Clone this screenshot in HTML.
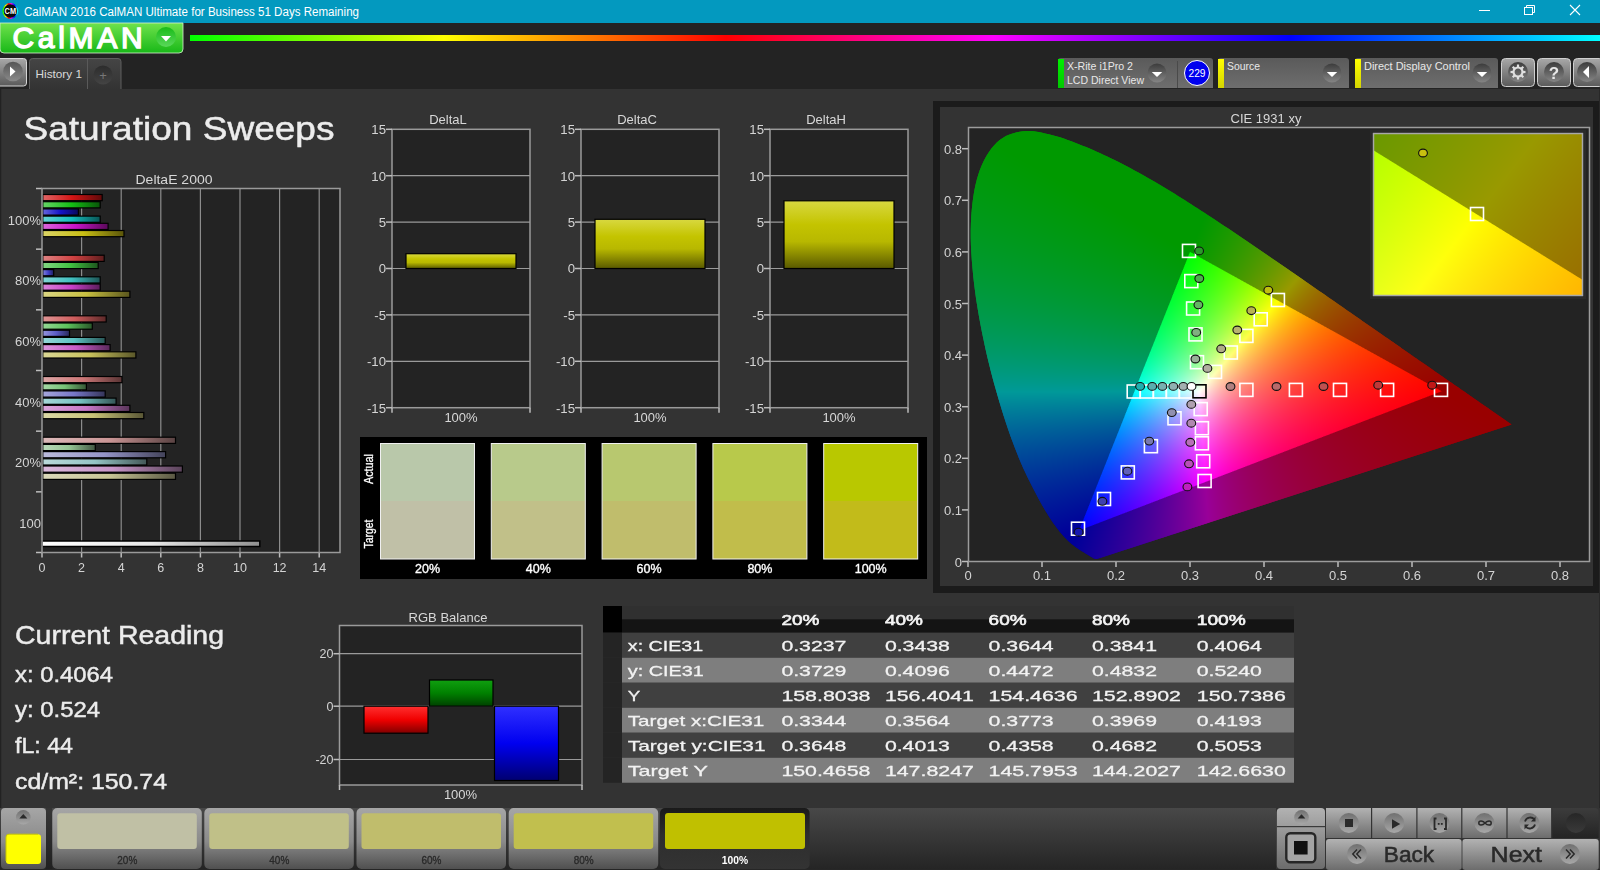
<!DOCTYPE html>
<html><head><meta charset="utf-8"><title>CalMAN</title>
<style>
html,body{margin:0;padding:0;width:1600px;height:870px;overflow:hidden;background:#333333;}
body{position:relative;font-family:"Liberation Sans",sans-serif;}
#cie{position:absolute;left:0;top:0;z-index:1;}
#cv{position:absolute;left:0;top:0;z-index:2;}
#fg{position:absolute;left:0;top:0;z-index:3;}
</style></head><body>
<svg id="cie" width="1600" height="870">
<rect x="933" y="101" width="667" height="492" fill="#1b1b1b"/>
<rect x="940" y="107" width="653" height="479" fill="#333333"/>
<rect x="968" y="127" width="622" height="435" fill="#232323"/>
<rect x="1374" y="134" width="208" height="161" fill="#232323"/>
<clipPath id="clA"><path d="M1096.8 558.9L1096.8 558.9L1096.8 558.9L1096.8 558.9L1096.8 558.9L1096.8 558.9L1096.8 558.9L1096.8 558.9L1096.8 558.9L1096.7 558.9L1096.7 558.9L1096.7 558.9L1096.7 558.9L1096.7 559.0L1096.7 559.0L1096.6 559.0L1096.6 559.0L1096.6 559.0L1096.6 559.0L1096.6 559.0L1096.5 559.0L1096.5 559.0L1096.5 559.0L1096.5 559.0L1096.5 559.0L1096.4 559.0L1096.4 559.0L1096.4 559.0L1096.4 559.0L1096.3 559.0L1096.3 559.0L1096.3 559.0L1096.2 559.0L1096.2 559.0L1096.2 559.0L1096.2 559.0L1096.1 559.0L1096.1 559.0L1096.1 559.0L1096.1 559.0L1096.0 559.0L1096.0 559.0L1096.0 559.0L1095.9 559.0L1095.9 559.0L1095.8 559.0L1095.8 559.0L1095.8 559.0L1095.7 559.0L1095.7 559.0L1095.6 559.0L1095.6 559.0L1095.6 559.0L1095.5 559.0L1095.5 559.0L1095.4 559.0L1095.4 559.0L1095.3 559.0L1095.2 559.0L1095.2 559.0L1095.1 559.0L1095.1 558.9L1095.0 558.9L1094.9 558.9L1094.8 558.9L1094.7 558.8L1094.7 558.8L1094.6 558.8L1094.5 558.7L1094.4 558.7L1094.2 558.6L1094.1 558.6L1094.0 558.5L1093.9 558.4L1093.8 558.4L1093.7 558.3L1093.5 558.3L1093.4 558.2L1093.3 558.1L1093.1 558.0L1093.0 557.9L1092.8 557.8L1092.7 557.7L1092.5 557.6L1092.3 557.5L1092.1 557.4L1091.9 557.3L1091.7 557.2L1091.5 557.1L1091.3 556.9L1091.1 556.8L1090.9 556.7L1090.6 556.5L1090.4 556.4L1090.2 556.2L1089.9 556.0L1089.7 555.9L1089.4 555.7L1089.1 555.5L1088.8 555.4L1088.5 555.2L1088.2 555.0L1087.9 554.8L1087.6 554.6L1087.2 554.4L1086.8 554.2L1086.5 553.9L1086.1 553.7L1085.7 553.4L1085.2 553.2L1084.8 552.9L1084.3 552.6L1083.9 552.4L1083.4 552.1L1082.9 551.8L1082.4 551.5L1081.9 551.2L1081.4 550.9L1080.9 550.5L1080.3 550.2L1079.7 549.8L1079.1 549.4L1078.5 549.0L1077.9 548.6L1077.3 548.1L1076.6 547.7L1076.0 547.2L1075.3 546.7L1074.6 546.2L1073.8 545.6L1073.1 545.1L1072.4 544.5L1071.6 543.9L1070.8 543.2L1070.0 542.5L1069.2 541.8L1068.3 540.9L1067.3 540.0L1066.4 539.0L1065.4 538.0L1064.3 536.9L1063.3 535.7L1062.2 534.5L1061.0 533.1L1059.8 531.7L1058.6 530.1L1057.4 528.5L1056.1 526.9L1054.8 525.1L1053.4 523.2L1052.0 521.2L1050.6 519.0L1049.1 516.7L1047.6 514.2L1046.0 511.7L1044.4 509.0L1042.7 506.1L1041.0 503.1L1039.2 500.0L1037.4 496.6L1035.6 493.0L1033.6 489.3L1031.6 485.4L1029.5 481.3L1027.4 477.0L1025.3 472.6L1023.1 467.9L1021.0 463.1L1018.8 457.9L1016.7 452.6L1014.5 447.0L1012.4 441.2L1010.2 435.2L1008.0 429.0L1005.8 422.6L1003.7 416.0L1001.6 409.3L999.5 402.3L997.4 395.0L995.2 387.6L993.1 379.9L991.1 372.2L989.1 364.3L987.2 356.4L985.4 348.5L983.7 340.6L982.0 332.5L980.4 324.3L978.9 316.1L977.5 307.8L976.2 299.7L975.1 291.6L974.1 283.7L973.2 275.9L972.5 268.1L971.8 260.3L971.3 252.7L970.9 245.1L970.7 237.8L970.7 230.6L970.9 223.6L971.2 216.8L971.7 210.1L972.4 203.6L973.2 197.2L974.2 191.1L975.4 185.2L976.8 179.6L978.3 174.4L980.0 169.4L982.0 164.7L984.1 160.3L986.4 156.1L988.8 152.2L991.4 148.6L994.0 145.4L996.8 142.5L999.7 140.0L1002.7 137.9L1005.9 136.1L1009.2 134.6L1012.6 133.5L1016.0 132.5L1019.5 131.8L1023.0 131.3L1026.5 131.0L1030.1 131.0L1033.8 131.3L1037.5 131.9L1041.3 132.6L1045.0 133.4L1048.8 134.3L1052.5 135.2L1056.2 136.2L1060.0 137.3L1063.8 138.5L1067.6 139.9L1071.3 141.3L1075.1 142.7L1078.8 144.2L1082.5 145.7L1086.1 147.1L1089.7 148.6L1093.3 150.1L1096.8 151.7L1100.3 153.3L1103.8 154.9L1107.3 156.5L1110.7 158.2L1114.2 159.9L1117.6 161.6L1121.0 163.3L1124.4 165.1L1127.8 166.8L1131.2 168.6L1134.5 170.4L1137.9 172.3L1141.3 174.1L1144.6 176.0L1148.0 177.9L1151.3 179.9L1154.7 181.8L1158.0 183.8L1161.4 185.8L1164.7 187.8L1168.0 189.8L1171.3 191.8L1174.7 193.8L1178.0 195.9L1181.3 198.0L1184.6 200.1L1187.9 202.2L1191.2 204.3L1194.5 206.4L1197.8 208.5L1201.1 210.7L1204.4 212.8L1207.7 215.0L1211.0 217.1L1214.3 219.3L1217.6 221.5L1220.9 223.7L1224.2 225.9L1227.5 228.1L1230.9 230.3L1234.2 232.6L1237.5 234.8L1240.8 237.0L1244.1 239.3L1247.4 241.5L1250.7 243.7L1254.0 246.0L1257.3 248.2L1260.6 250.5L1263.9 252.8L1267.2 255.0L1270.4 257.3L1273.7 259.5L1277.0 261.8L1280.3 264.0L1283.6 266.3L1286.9 268.5L1290.1 270.8L1293.4 273.0L1296.6 275.3L1299.9 277.5L1303.1 279.8L1306.3 282.0L1309.6 284.2L1312.8 286.4L1316.0 288.7L1319.1 290.9L1322.3 293.1L1325.5 295.3L1328.6 297.5L1331.8 299.6L1334.9 301.8L1338.0 304.0L1341.1 306.1L1344.2 308.3L1347.2 310.4L1350.3 312.5L1353.3 314.6L1356.4 316.7L1359.4 318.8L1362.3 320.9L1365.3 323.0L1368.2 325.0L1371.2 327.0L1374.0 329.0L1376.9 331.0L1379.8 333.0L1382.6 335.0L1385.4 336.9L1388.2 338.8L1390.9 340.7L1393.6 342.6L1396.3 344.5L1399.0 346.3L1401.6 348.2L1404.2 350.0L1406.7 351.7L1409.3 353.5L1411.7 355.2L1414.1 356.9L1416.5 358.6L1418.8 360.2L1421.1 361.8L1423.4 363.3L1425.6 364.8L1427.7 366.3L1429.9 367.8L1432.0 369.3L1434.1 370.7L1436.1 372.2L1438.1 373.6L1440.1 374.9L1442.1 376.3L1444.0 377.6L1445.8 378.9L1447.7 380.2L1449.4 381.4L1451.2 382.6L1452.9 383.8L1454.5 384.9L1456.1 386.0L1457.7 387.1L1459.2 388.1L1460.7 389.2L1462.1 390.2L1463.6 391.1L1464.9 392.1L1466.3 393.0L1467.6 393.9L1468.8 394.8L1470.1 395.7L1471.3 396.5L1472.4 397.4L1473.6 398.1L1474.7 398.9L1475.7 399.6L1476.8 400.4L1477.8 401.1L1478.8 401.8L1479.7 402.4L1480.6 403.1L1481.5 403.7L1482.4 404.3L1483.3 404.9L1484.1 405.4L1484.9 406.0L1485.7 406.5L1486.4 407.1L1487.2 407.6L1487.9 408.1L1488.6 408.6L1489.3 409.0L1489.9 409.5L1490.6 410.0L1491.2 410.4L1491.8 410.8L1492.5 411.3L1493.1 411.7L1493.6 412.1L1494.2 412.5L1494.8 412.9L1495.3 413.2L1495.8 413.6L1496.4 414.0L1496.9 414.3L1497.4 414.7L1497.8 415.0L1498.3 415.3L1498.8 415.7L1499.2 416.0L1499.6 416.3L1500.1 416.6L1500.5 416.8L1500.9 417.1L1501.3 417.4L1501.6 417.6L1502.0 417.9L1502.3 418.1L1502.7 418.3L1503.0 418.6L1503.3 418.8L1503.6 419.0L1503.9 419.2L1504.2 419.4L1504.5 419.6L1504.7 419.8L1505.0 419.9L1505.2 420.1L1505.5 420.3L1505.7 420.4L1505.9 420.6L1506.2 420.8L1506.4 420.9L1506.6 421.0L1506.8 421.2L1506.9 421.3L1507.1 421.4L1507.2 421.5L1507.3 421.6L1507.5 421.7L1507.6 421.8L1507.7 421.9L1507.9 422.0L1508.2 422.2L1508.6 422.4L1509.0 422.7L1509.5 423.1L1510.0 423.4L1510.5 423.8L1511.0 424.1L1511.4 424.4L1511.7 424.6Z"/></clipPath>
<g clip-path="url(#clA)" shape-rendering="crispEdges">
<rect x="969" y="128" width="300" height="12" fill="#090"/>
<rect x="1269" y="128" width="36" height="12" fill="#290"/>
<rect x="1305" y="128" width="36" height="12" fill="#390"/>
<rect x="1341" y="128" width="24" height="12" fill="#490"/>
<rect x="1365" y="128" width="24" height="12" fill="#690"/>
<rect x="1389" y="128" width="24" height="12" fill="#790"/>
<rect x="1413" y="128" width="24" height="12" fill="#990"/>
<rect x="1437" y="128" width="24" height="12" fill="#970"/>
<rect x="1461" y="128" width="36" height="12" fill="#960"/>
<rect x="1497" y="128" width="60" height="12" fill="#940"/>
<rect x="1557" y="128" width="32" height="12" fill="#930"/>
<rect x="969" y="140" width="300" height="12" fill="#090"/>
<rect x="1269" y="140" width="24" height="12" fill="#290"/>
<rect x="1293" y="140" width="36" height="12" fill="#390"/>
<rect x="1329" y="140" width="24" height="12" fill="#490"/>
<rect x="1353" y="140" width="24" height="12" fill="#690"/>
<rect x="1377" y="140" width="24" height="12" fill="#790"/>
<rect x="1401" y="140" width="24" height="12" fill="#990"/>
<rect x="1425" y="140" width="24" height="12" fill="#970"/>
<rect x="1449" y="140" width="36" height="12" fill="#960"/>
<rect x="1485" y="140" width="60" height="12" fill="#940"/>
<rect x="1545" y="140" width="44" height="12" fill="#930"/>
<rect x="969" y="152" width="288" height="12" fill="#090"/>
<rect x="1257" y="152" width="36" height="12" fill="#290"/>
<rect x="1293" y="152" width="24" height="12" fill="#390"/>
<rect x="1317" y="152" width="24" height="12" fill="#490"/>
<rect x="1341" y="152" width="36" height="12" fill="#690"/>
<rect x="1377" y="152" width="12" height="12" fill="#790"/>
<rect x="1389" y="152" width="24" height="12" fill="#990"/>
<rect x="1413" y="152" width="24" height="12" fill="#970"/>
<rect x="1437" y="152" width="36" height="12" fill="#960"/>
<rect x="1473" y="152" width="60" height="12" fill="#940"/>
<rect x="1533" y="152" width="56" height="12" fill="#930"/>
<rect x="969" y="164" width="288" height="12" fill="#090"/>
<rect x="1257" y="164" width="24" height="12" fill="#290"/>
<rect x="1281" y="164" width="36" height="12" fill="#390"/>
<rect x="1317" y="164" width="24" height="12" fill="#490"/>
<rect x="1341" y="164" width="24" height="12" fill="#690"/>
<rect x="1365" y="164" width="24" height="12" fill="#790"/>
<rect x="1389" y="164" width="12" height="12" fill="#990"/>
<rect x="1401" y="164" width="24" height="12" fill="#970"/>
<rect x="1425" y="164" width="36" height="12" fill="#960"/>
<rect x="1461" y="164" width="48" height="12" fill="#940"/>
<rect x="1509" y="164" width="80" height="12" fill="#930"/>
<rect x="969" y="176" width="276" height="12" fill="#090"/>
<rect x="1245" y="176" width="36" height="12" fill="#290"/>
<rect x="1281" y="176" width="24" height="12" fill="#390"/>
<rect x="1305" y="176" width="24" height="12" fill="#490"/>
<rect x="1329" y="176" width="24" height="12" fill="#690"/>
<rect x="1353" y="176" width="24" height="12" fill="#790"/>
<rect x="1377" y="176" width="12" height="12" fill="#990"/>
<rect x="1389" y="176" width="24" height="12" fill="#970"/>
<rect x="1413" y="176" width="36" height="12" fill="#960"/>
<rect x="1449" y="176" width="48" height="12" fill="#940"/>
<rect x="1497" y="176" width="72" height="12" fill="#930"/>
<rect x="1569" y="176" width="20" height="12" fill="#920"/>
<rect x="969" y="188" width="276" height="12" fill="#090"/>
<rect x="1245" y="188" width="24" height="12" fill="#290"/>
<rect x="1269" y="188" width="24" height="12" fill="#390"/>
<rect x="1293" y="188" width="24" height="12" fill="#490"/>
<rect x="1317" y="188" width="24" height="12" fill="#690"/>
<rect x="1341" y="188" width="24" height="12" fill="#790"/>
<rect x="1365" y="188" width="12" height="12" fill="#990"/>
<rect x="1377" y="188" width="24" height="12" fill="#970"/>
<rect x="1401" y="188" width="36" height="12" fill="#960"/>
<rect x="1437" y="188" width="48" height="12" fill="#940"/>
<rect x="1485" y="188" width="72" height="12" fill="#930"/>
<rect x="1557" y="188" width="32" height="12" fill="#920"/>
<rect x="969" y="200" width="264" height="12" fill="#090"/>
<rect x="1233" y="200" width="36" height="12" fill="#290"/>
<rect x="1269" y="200" width="24" height="12" fill="#390"/>
<rect x="1293" y="200" width="24" height="12" fill="#490"/>
<rect x="1317" y="200" width="12" height="12" fill="#690"/>
<rect x="1329" y="200" width="24" height="12" fill="#790"/>
<rect x="1353" y="200" width="12" height="12" fill="#990"/>
<rect x="1365" y="200" width="24" height="12" fill="#970"/>
<rect x="1389" y="200" width="36" height="12" fill="#960"/>
<rect x="1425" y="200" width="48" height="12" fill="#940"/>
<rect x="1473" y="200" width="72" height="12" fill="#930"/>
<rect x="1545" y="200" width="44" height="12" fill="#920"/>
<rect x="969" y="212" width="12" height="12" fill="#092"/>
<rect x="981" y="212" width="252" height="12" fill="#090"/>
<rect x="1233" y="212" width="24" height="12" fill="#290"/>
<rect x="1257" y="212" width="24" height="12" fill="#390"/>
<rect x="1281" y="212" width="24" height="12" fill="#490"/>
<rect x="1305" y="212" width="24" height="12" fill="#690"/>
<rect x="1329" y="212" width="12" height="12" fill="#790"/>
<rect x="1341" y="212" width="12" height="12" fill="#990"/>
<rect x="1353" y="212" width="24" height="12" fill="#970"/>
<rect x="1377" y="212" width="36" height="12" fill="#960"/>
<rect x="1413" y="212" width="36" height="12" fill="#940"/>
<rect x="1449" y="212" width="72" height="12" fill="#930"/>
<rect x="1521" y="212" width="68" height="12" fill="#920"/>
<rect x="969" y="224" width="48" height="12" fill="#092"/>
<rect x="1017" y="224" width="204" height="12" fill="#090"/>
<rect x="1221" y="224" width="24" height="12" fill="#290"/>
<rect x="1245" y="224" width="24" height="12" fill="#390"/>
<rect x="1269" y="224" width="24" height="12" fill="#490"/>
<rect x="1293" y="224" width="24" height="12" fill="#690"/>
<rect x="1317" y="224" width="12" height="12" fill="#790"/>
<rect x="1329" y="224" width="12" height="12" fill="#990"/>
<rect x="1341" y="224" width="24" height="12" fill="#970"/>
<rect x="1365" y="224" width="36" height="12" fill="#960"/>
<rect x="1401" y="224" width="36" height="12" fill="#940"/>
<rect x="1437" y="224" width="72" height="12" fill="#930"/>
<rect x="1509" y="224" width="80" height="12" fill="#920"/>
<rect x="969" y="236" width="84" height="12" fill="#092"/>
<rect x="1053" y="236" width="168" height="12" fill="#090"/>
<rect x="1221" y="236" width="24" height="12" fill="#290"/>
<rect x="1245" y="236" width="24" height="12" fill="#390"/>
<rect x="1269" y="236" width="12" height="12" fill="#490"/>
<rect x="1281" y="236" width="24" height="12" fill="#690"/>
<rect x="1305" y="236" width="12" height="12" fill="#790"/>
<rect x="1317" y="236" width="24" height="12" fill="#990"/>
<rect x="1341" y="236" width="12" height="12" fill="#970"/>
<rect x="1353" y="236" width="36" height="12" fill="#960"/>
<rect x="1389" y="236" width="36" height="12" fill="#940"/>
<rect x="1425" y="236" width="60" height="12" fill="#930"/>
<rect x="1485" y="236" width="104" height="12" fill="#920"/>
<rect x="969" y="248" width="108" height="12" fill="#092"/>
<rect x="1077" y="248" width="108" height="12" fill="#090"/>
<rect x="1185" y="248" width="12" height="12" fill="#0e0"/>
<rect x="1197" y="248" width="12" height="12" fill="#090"/>
<rect x="1209" y="248" width="24" height="12" fill="#290"/>
<rect x="1233" y="248" width="24" height="12" fill="#390"/>
<rect x="1257" y="248" width="24" height="12" fill="#490"/>
<rect x="1281" y="248" width="12" height="12" fill="#690"/>
<rect x="1293" y="248" width="24" height="12" fill="#790"/>
<rect x="1317" y="248" width="12" height="12" fill="#990"/>
<rect x="1329" y="248" width="12" height="12" fill="#970"/>
<rect x="1341" y="248" width="36" height="12" fill="#960"/>
<rect x="1377" y="248" width="36" height="12" fill="#940"/>
<rect x="1413" y="248" width="60" height="12" fill="#930"/>
<rect x="1473" y="248" width="96" height="12" fill="#920"/>
<rect x="1569" y="248" width="20" height="12" fill="#900"/>
<rect x="969" y="260" width="144" height="12" fill="#092"/>
<rect x="1113" y="260" width="72" height="12" fill="#090"/>
<rect x="1185" y="260" width="12" height="12" fill="#0e0"/>
<rect x="1197" y="260" width="12" height="12" fill="#2e0"/>
<rect x="1209" y="260" width="12" height="12" fill="#3e0"/>
<rect x="1221" y="260" width="12" height="12" fill="#290"/>
<rect x="1233" y="260" width="12" height="12" fill="#390"/>
<rect x="1245" y="260" width="24" height="12" fill="#490"/>
<rect x="1269" y="260" width="12" height="12" fill="#690"/>
<rect x="1281" y="260" width="24" height="12" fill="#790"/>
<rect x="1305" y="260" width="12" height="12" fill="#990"/>
<rect x="1317" y="260" width="12" height="12" fill="#970"/>
<rect x="1329" y="260" width="36" height="12" fill="#960"/>
<rect x="1365" y="260" width="36" height="12" fill="#940"/>
<rect x="1401" y="260" width="48" height="12" fill="#930"/>
<rect x="1449" y="260" width="108" height="12" fill="#920"/>
<rect x="1557" y="260" width="32" height="12" fill="#900"/>
<rect x="969" y="272" width="36" height="12" fill="#093"/>
<rect x="1005" y="272" width="144" height="12" fill="#092"/>
<rect x="1149" y="272" width="36" height="12" fill="#090"/>
<rect x="1185" y="272" width="12" height="12" fill="#0e0"/>
<rect x="1197" y="272" width="12" height="12" fill="#2e0"/>
<rect x="1209" y="272" width="12" height="12" fill="#3e0"/>
<rect x="1221" y="272" width="12" height="12" fill="#4e0"/>
<rect x="1233" y="272" width="12" height="12" fill="#390"/>
<rect x="1245" y="272" width="12" height="12" fill="#490"/>
<rect x="1257" y="272" width="24" height="12" fill="#690"/>
<rect x="1281" y="272" width="12" height="12" fill="#790"/>
<rect x="1293" y="272" width="12" height="12" fill="#990"/>
<rect x="1305" y="272" width="12" height="12" fill="#970"/>
<rect x="1317" y="272" width="36" height="12" fill="#960"/>
<rect x="1353" y="272" width="24" height="12" fill="#940"/>
<rect x="1377" y="272" width="60" height="12" fill="#930"/>
<rect x="1437" y="272" width="96" height="12" fill="#920"/>
<rect x="1533" y="272" width="56" height="12" fill="#900"/>
<rect x="969" y="284" width="84" height="12" fill="#093"/>
<rect x="1053" y="284" width="120" height="12" fill="#092"/>
<rect x="1173" y="284" width="12" height="12" fill="#0e2"/>
<rect x="1185" y="284" width="12" height="12" fill="#2e2"/>
<rect x="1197" y="284" width="12" height="12" fill="#3e2"/>
<rect x="1209" y="284" width="12" height="12" fill="#4e0"/>
<rect x="1221" y="284" width="12" height="12" fill="#6e0"/>
<rect x="1233" y="284" width="12" height="12" fill="#7e0"/>
<rect x="1245" y="284" width="12" height="12" fill="#9e0"/>
<rect x="1257" y="284" width="12" height="12" fill="#690"/>
<rect x="1269" y="284" width="12" height="12" fill="#790"/>
<rect x="1281" y="284" width="12" height="12" fill="#990"/>
<rect x="1293" y="284" width="12" height="12" fill="#970"/>
<rect x="1305" y="284" width="24" height="12" fill="#960"/>
<rect x="1329" y="284" width="36" height="12" fill="#940"/>
<rect x="1365" y="284" width="60" height="12" fill="#930"/>
<rect x="1425" y="284" width="84" height="12" fill="#920"/>
<rect x="1509" y="284" width="80" height="12" fill="#900"/>
<rect x="969" y="296" width="132" height="12" fill="#093"/>
<rect x="1101" y="296" width="72" height="12" fill="#092"/>
<rect x="1173" y="296" width="12" height="12" fill="#0e3"/>
<rect x="1185" y="296" width="12" height="12" fill="#2e2"/>
<rect x="1197" y="296" width="12" height="12" fill="#3e2"/>
<rect x="1209" y="296" width="12" height="12" fill="#4e2"/>
<rect x="1221" y="296" width="12" height="12" fill="#7e2"/>
<rect x="1233" y="296" width="12" height="12" fill="#9e2"/>
<rect x="1245" y="296" width="12" height="12" fill="#ae0"/>
<rect x="1257" y="296" width="12" height="12" fill="#ce0"/>
<rect x="1269" y="296" width="12" height="12" fill="#ee0"/>
<rect x="1281" y="296" width="24" height="12" fill="#970"/>
<rect x="1305" y="296" width="12" height="12" fill="#960"/>
<rect x="1317" y="296" width="36" height="12" fill="#940"/>
<rect x="1353" y="296" width="48" height="12" fill="#930"/>
<rect x="1401" y="296" width="84" height="12" fill="#920"/>
<rect x="1485" y="296" width="104" height="12" fill="#900"/>
<rect x="969" y="308" width="24" height="12" fill="#094"/>
<rect x="993" y="308" width="156" height="12" fill="#093"/>
<rect x="1149" y="308" width="12" height="12" fill="#092"/>
<rect x="1161" y="308" width="12" height="12" fill="#0e3"/>
<rect x="1173" y="308" width="12" height="12" fill="#2e3"/>
<rect x="1185" y="308" width="12" height="12" fill="#3e3"/>
<rect x="1197" y="308" width="12" height="12" fill="#4e3"/>
<rect x="1209" y="308" width="12" height="12" fill="#6e3"/>
<rect x="1221" y="308" width="12" height="12" fill="#7e2"/>
<rect x="1233" y="308" width="12" height="12" fill="#ae2"/>
<rect x="1245" y="308" width="12" height="12" fill="#ce2"/>
<rect x="1257" y="308" width="12" height="12" fill="#ee2"/>
<rect x="1269" y="308" width="12" height="12" fill="#ed0"/>
<rect x="1281" y="308" width="12" height="12" fill="#ec0"/>
<rect x="1293" y="308" width="12" height="12" fill="#ea0"/>
<rect x="1305" y="308" width="36" height="12" fill="#940"/>
<rect x="1341" y="308" width="48" height="12" fill="#930"/>
<rect x="1389" y="308" width="84" height="12" fill="#920"/>
<rect x="1473" y="308" width="116" height="12" fill="#900"/>
<rect x="969" y="320" width="96" height="12" fill="#094"/>
<rect x="1065" y="320" width="96" height="12" fill="#093"/>
<rect x="1161" y="320" width="12" height="12" fill="#0e4"/>
<rect x="1173" y="320" width="12" height="12" fill="#2e4"/>
<rect x="1185" y="320" width="12" height="12" fill="#3e4"/>
<rect x="1197" y="320" width="12" height="12" fill="#6e4"/>
<rect x="1209" y="320" width="12" height="12" fill="#7e3"/>
<rect x="1221" y="320" width="12" height="12" fill="#9e3"/>
<rect x="1233" y="320" width="12" height="12" fill="#ce3"/>
<rect x="1245" y="320" width="12" height="12" fill="#de3"/>
<rect x="1257" y="320" width="12" height="12" fill="#ed2"/>
<rect x="1269" y="320" width="12" height="12" fill="#ec2"/>
<rect x="1281" y="320" width="12" height="12" fill="#ea0"/>
<rect x="1293" y="320" width="12" height="12" fill="#e90"/>
<rect x="1305" y="320" width="24" height="12" fill="#e70"/>
<rect x="1329" y="320" width="36" height="12" fill="#930"/>
<rect x="1365" y="320" width="84" height="12" fill="#920"/>
<rect x="1449" y="320" width="140" height="12" fill="#900"/>
<rect x="969" y="332" width="168" height="12" fill="#094"/>
<rect x="1137" y="332" width="24" height="12" fill="#093"/>
<rect x="1161" y="332" width="12" height="12" fill="#2e6"/>
<rect x="1173" y="332" width="12" height="12" fill="#3e6"/>
<rect x="1185" y="332" width="12" height="12" fill="#4e6"/>
<rect x="1197" y="332" width="12" height="12" fill="#6e4"/>
<rect x="1209" y="332" width="12" height="12" fill="#9e4"/>
<rect x="1221" y="332" width="12" height="12" fill="#ae4"/>
<rect x="1233" y="332" width="12" height="12" fill="#de4"/>
<rect x="1245" y="332" width="12" height="12" fill="#ed3"/>
<rect x="1257" y="332" width="12" height="12" fill="#ec3"/>
<rect x="1269" y="332" width="12" height="12" fill="#ea2"/>
<rect x="1281" y="332" width="12" height="12" fill="#e92"/>
<rect x="1293" y="332" width="12" height="12" fill="#e70"/>
<rect x="1305" y="332" width="24" height="12" fill="#e60"/>
<rect x="1329" y="332" width="12" height="12" fill="#e40"/>
<rect x="1341" y="332" width="12" height="12" fill="#930"/>
<rect x="1353" y="332" width="72" height="12" fill="#920"/>
<rect x="1425" y="332" width="164" height="12" fill="#900"/>
<rect x="969" y="344" width="84" height="12" fill="#096"/>
<rect x="1053" y="344" width="96" height="12" fill="#094"/>
<rect x="1149" y="344" width="12" height="12" fill="#0e7"/>
<rect x="1161" y="344" width="12" height="12" fill="#2e7"/>
<rect x="1173" y="344" width="12" height="12" fill="#3e7"/>
<rect x="1185" y="344" width="12" height="12" fill="#6e7"/>
<rect x="1197" y="344" width="12" height="12" fill="#7e6"/>
<rect x="1209" y="344" width="12" height="12" fill="#ae6"/>
<rect x="1221" y="344" width="12" height="12" fill="#de6"/>
<rect x="1233" y="344" width="12" height="12" fill="#ee6"/>
<rect x="1245" y="344" width="12" height="12" fill="#ec4"/>
<rect x="1257" y="344" width="12" height="12" fill="#ea3"/>
<rect x="1269" y="344" width="12" height="12" fill="#e93"/>
<rect x="1281" y="344" width="12" height="12" fill="#e72"/>
<rect x="1293" y="344" width="12" height="12" fill="#e62"/>
<rect x="1305" y="344" width="12" height="12" fill="#e60"/>
<rect x="1317" y="344" width="24" height="12" fill="#e40"/>
<rect x="1341" y="344" width="24" height="12" fill="#e30"/>
<rect x="1365" y="344" width="36" height="12" fill="#920"/>
<rect x="1401" y="344" width="188" height="12" fill="#900"/>
<rect x="969" y="356" width="180" height="12" fill="#096"/>
<rect x="1149" y="356" width="12" height="12" fill="#0e9"/>
<rect x="1161" y="356" width="12" height="12" fill="#3e9"/>
<rect x="1173" y="356" width="12" height="12" fill="#4e9"/>
<rect x="1185" y="356" width="12" height="12" fill="#7e9"/>
<rect x="1197" y="356" width="12" height="12" fill="#ae9"/>
<rect x="1209" y="356" width="12" height="12" fill="#ce9"/>
<rect x="1221" y="356" width="12" height="12" fill="#ee7"/>
<rect x="1233" y="356" width="12" height="12" fill="#ec6"/>
<rect x="1245" y="356" width="12" height="12" fill="#ea4"/>
<rect x="1257" y="356" width="12" height="12" fill="#e94"/>
<rect x="1269" y="356" width="12" height="12" fill="#e73"/>
<rect x="1281" y="356" width="12" height="12" fill="#e63"/>
<rect x="1293" y="356" width="12" height="12" fill="#e62"/>
<rect x="1305" y="356" width="24" height="12" fill="#e42"/>
<rect x="1329" y="356" width="36" height="12" fill="#e30"/>
<rect x="1365" y="356" width="24" height="12" fill="#e20"/>
<rect x="1389" y="356" width="200" height="12" fill="#900"/>
<rect x="969" y="368" width="156" height="12" fill="#097"/>
<rect x="1125" y="368" width="12" height="12" fill="#096"/>
<rect x="1137" y="368" width="12" height="12" fill="#0ec"/>
<rect x="1149" y="368" width="12" height="12" fill="#2ec"/>
<rect x="1161" y="368" width="12" height="12" fill="#4ec"/>
<rect x="1173" y="368" width="12" height="12" fill="#6ea"/>
<rect x="1185" y="368" width="12" height="12" fill="#9ea"/>
<rect x="1197" y="368" width="12" height="12" fill="#cea"/>
<rect x="1209" y="368" width="12" height="12" fill="#eea"/>
<rect x="1221" y="368" width="12" height="12" fill="#ec9"/>
<rect x="1233" y="368" width="12" height="12" fill="#ea6"/>
<rect x="1245" y="368" width="12" height="12" fill="#e96"/>
<rect x="1257" y="368" width="12" height="12" fill="#e74"/>
<rect x="1269" y="368" width="12" height="12" fill="#e63"/>
<rect x="1281" y="368" width="24" height="12" fill="#e43"/>
<rect x="1305" y="368" width="36" height="12" fill="#e32"/>
<rect x="1341" y="368" width="60" height="12" fill="#e20"/>
<rect x="1401" y="368" width="12" height="12" fill="#e00"/>
<rect x="1413" y="368" width="176" height="12" fill="#900"/>
<rect x="969" y="380" width="24" height="12" fill="#099"/>
<rect x="993" y="380" width="144" height="12" fill="#097"/>
<rect x="1137" y="380" width="12" height="12" fill="#0ed"/>
<rect x="1149" y="380" width="12" height="12" fill="#3ed"/>
<rect x="1161" y="380" width="12" height="12" fill="#6ed"/>
<rect x="1173" y="380" width="12" height="12" fill="#9ed"/>
<rect x="1185" y="380" width="12" height="12" fill="#ced"/>
<rect x="1197" y="380" width="12" height="12" fill="#eed"/>
<rect x="1209" y="380" width="12" height="12" fill="#eca"/>
<rect x="1221" y="380" width="12" height="12" fill="#ea9"/>
<rect x="1233" y="380" width="12" height="12" fill="#e97"/>
<rect x="1245" y="380" width="12" height="12" fill="#e76"/>
<rect x="1257" y="380" width="12" height="12" fill="#e64"/>
<rect x="1269" y="380" width="12" height="12" fill="#e44"/>
<rect x="1281" y="380" width="12" height="12" fill="#e43"/>
<rect x="1293" y="380" width="12" height="12" fill="#e33"/>
<rect x="1305" y="380" width="24" height="12" fill="#e32"/>
<rect x="1329" y="380" width="24" height="12" fill="#e22"/>
<rect x="1353" y="380" width="24" height="12" fill="#e20"/>
<rect x="1377" y="380" width="60" height="12" fill="#e00"/>
<rect x="1437" y="380" width="152" height="12" fill="#900"/>
<rect x="969" y="392" width="36" height="12" fill="#099"/>
<rect x="1005" y="392" width="132" height="12" fill="#079"/>
<rect x="1137" y="392" width="12" height="12" fill="#2de"/>
<rect x="1149" y="392" width="12" height="12" fill="#4de"/>
<rect x="1161" y="392" width="12" height="12" fill="#6de"/>
<rect x="1173" y="392" width="12" height="12" fill="#9de"/>
<rect x="1185" y="392" width="12" height="12" fill="#cde"/>
<rect x="1197" y="392" width="12" height="12" fill="#ece"/>
<rect x="1209" y="392" width="12" height="12" fill="#eac"/>
<rect x="1221" y="392" width="12" height="12" fill="#e79"/>
<rect x="1233" y="392" width="12" height="12" fill="#e67"/>
<rect x="1245" y="392" width="12" height="12" fill="#e66"/>
<rect x="1257" y="392" width="12" height="12" fill="#e46"/>
<rect x="1269" y="392" width="24" height="12" fill="#e34"/>
<rect x="1293" y="392" width="12" height="12" fill="#e33"/>
<rect x="1305" y="392" width="12" height="12" fill="#e23"/>
<rect x="1317" y="392" width="36" height="12" fill="#e22"/>
<rect x="1353" y="392" width="12" height="12" fill="#e02"/>
<rect x="1365" y="392" width="60" height="12" fill="#e00"/>
<rect x="1425" y="392" width="164" height="12" fill="#900"/>
<rect x="969" y="404" width="132" height="12" fill="#079"/>
<rect x="1101" y="404" width="24" height="12" fill="#069"/>
<rect x="1125" y="404" width="12" height="12" fill="#0ce"/>
<rect x="1137" y="404" width="12" height="12" fill="#2ce"/>
<rect x="1149" y="404" width="12" height="12" fill="#4ae"/>
<rect x="1161" y="404" width="12" height="12" fill="#7ae"/>
<rect x="1173" y="404" width="12" height="12" fill="#9ae"/>
<rect x="1185" y="404" width="12" height="12" fill="#cae"/>
<rect x="1197" y="404" width="12" height="12" fill="#eae"/>
<rect x="1209" y="404" width="12" height="12" fill="#e7c"/>
<rect x="1221" y="404" width="12" height="12" fill="#e6a"/>
<rect x="1233" y="404" width="12" height="12" fill="#e49"/>
<rect x="1245" y="404" width="12" height="12" fill="#e47"/>
<rect x="1257" y="404" width="12" height="12" fill="#e36"/>
<rect x="1269" y="404" width="12" height="12" fill="#e34"/>
<rect x="1281" y="404" width="12" height="12" fill="#e24"/>
<rect x="1293" y="404" width="36" height="12" fill="#e23"/>
<rect x="1329" y="404" width="60" height="12" fill="#e02"/>
<rect x="1389" y="404" width="200" height="12" fill="#900"/>
<rect x="969" y="416" width="156" height="12" fill="#069"/>
<rect x="1125" y="416" width="12" height="12" fill="#09e"/>
<rect x="1137" y="416" width="12" height="12" fill="#39e"/>
<rect x="1149" y="416" width="12" height="12" fill="#49e"/>
<rect x="1161" y="416" width="12" height="12" fill="#79e"/>
<rect x="1173" y="416" width="12" height="12" fill="#a9e"/>
<rect x="1185" y="416" width="12" height="12" fill="#c7e"/>
<rect x="1197" y="416" width="12" height="12" fill="#e7e"/>
<rect x="1209" y="416" width="12" height="12" fill="#e6c"/>
<rect x="1221" y="416" width="12" height="12" fill="#e4a"/>
<rect x="1233" y="416" width="12" height="12" fill="#e49"/>
<rect x="1245" y="416" width="12" height="12" fill="#e37"/>
<rect x="1257" y="416" width="12" height="12" fill="#e36"/>
<rect x="1269" y="416" width="12" height="12" fill="#e26"/>
<rect x="1281" y="416" width="24" height="12" fill="#e24"/>
<rect x="1305" y="416" width="36" height="12" fill="#e03"/>
<rect x="1341" y="416" width="24" height="12" fill="#e02"/>
<rect x="1365" y="416" width="224" height="12" fill="#900"/>
<rect x="969" y="428" width="48" height="12" fill="#069"/>
<rect x="1017" y="428" width="96" height="12" fill="#049"/>
<rect x="1113" y="428" width="12" height="12" fill="#07e"/>
<rect x="1125" y="428" width="12" height="12" fill="#27e"/>
<rect x="1137" y="428" width="12" height="12" fill="#37e"/>
<rect x="1149" y="428" width="12" height="12" fill="#67e"/>
<rect x="1161" y="428" width="12" height="12" fill="#76e"/>
<rect x="1173" y="428" width="12" height="12" fill="#a6e"/>
<rect x="1185" y="428" width="12" height="12" fill="#c6e"/>
<rect x="1197" y="428" width="12" height="12" fill="#e6e"/>
<rect x="1209" y="428" width="12" height="12" fill="#e4c"/>
<rect x="1221" y="428" width="12" height="12" fill="#e3a"/>
<rect x="1233" y="428" width="12" height="12" fill="#e39"/>
<rect x="1245" y="428" width="24" height="12" fill="#e27"/>
<rect x="1269" y="428" width="12" height="12" fill="#e26"/>
<rect x="1281" y="428" width="36" height="12" fill="#e04"/>
<rect x="1317" y="428" width="12" height="12" fill="#e03"/>
<rect x="1329" y="428" width="36" height="12" fill="#902"/>
<rect x="1365" y="428" width="224" height="12" fill="#900"/>
<rect x="969" y="440" width="120" height="12" fill="#049"/>
<rect x="1089" y="440" width="24" height="12" fill="#039"/>
<rect x="1113" y="440" width="12" height="12" fill="#06e"/>
<rect x="1125" y="440" width="12" height="12" fill="#26e"/>
<rect x="1137" y="440" width="12" height="12" fill="#46e"/>
<rect x="1149" y="440" width="12" height="12" fill="#66e"/>
<rect x="1161" y="440" width="12" height="12" fill="#74e"/>
<rect x="1173" y="440" width="12" height="12" fill="#a4e"/>
<rect x="1185" y="440" width="12" height="12" fill="#c4e"/>
<rect x="1197" y="440" width="12" height="12" fill="#e4e"/>
<rect x="1209" y="440" width="12" height="12" fill="#e3d"/>
<rect x="1221" y="440" width="12" height="12" fill="#e2a"/>
<rect x="1233" y="440" width="12" height="12" fill="#e29"/>
<rect x="1245" y="440" width="24" height="12" fill="#e07"/>
<rect x="1269" y="440" width="24" height="12" fill="#e06"/>
<rect x="1293" y="440" width="12" height="12" fill="#e04"/>
<rect x="1305" y="440" width="72" height="12" fill="#902"/>
<rect x="1377" y="440" width="212" height="12" fill="#900"/>
<rect x="969" y="452" width="36" height="12" fill="#049"/>
<rect x="1005" y="452" width="108" height="12" fill="#039"/>
<rect x="1113" y="452" width="12" height="12" fill="#04e"/>
<rect x="1125" y="452" width="12" height="12" fill="#34e"/>
<rect x="1137" y="452" width="12" height="12" fill="#44e"/>
<rect x="1149" y="452" width="12" height="12" fill="#63e"/>
<rect x="1161" y="452" width="12" height="12" fill="#73e"/>
<rect x="1173" y="452" width="12" height="12" fill="#a3e"/>
<rect x="1185" y="452" width="12" height="12" fill="#c3e"/>
<rect x="1197" y="452" width="12" height="12" fill="#e2e"/>
<rect x="1209" y="452" width="12" height="12" fill="#e2d"/>
<rect x="1221" y="452" width="12" height="12" fill="#e0c"/>
<rect x="1233" y="452" width="12" height="12" fill="#e0a"/>
<rect x="1245" y="452" width="12" height="12" fill="#e09"/>
<rect x="1257" y="452" width="12" height="12" fill="#e07"/>
<rect x="1269" y="452" width="48" height="12" fill="#903"/>
<rect x="1317" y="452" width="72" height="12" fill="#902"/>
<rect x="1389" y="452" width="200" height="12" fill="#900"/>
<rect x="969" y="464" width="108" height="12" fill="#039"/>
<rect x="1077" y="464" width="24" height="12" fill="#029"/>
<rect x="1101" y="464" width="12" height="12" fill="#03e"/>
<rect x="1113" y="464" width="12" height="12" fill="#23e"/>
<rect x="1125" y="464" width="12" height="12" fill="#33e"/>
<rect x="1137" y="464" width="12" height="12" fill="#43e"/>
<rect x="1149" y="464" width="12" height="12" fill="#63e"/>
<rect x="1161" y="464" width="12" height="12" fill="#92e"/>
<rect x="1173" y="464" width="12" height="12" fill="#a2e"/>
<rect x="1185" y="464" width="12" height="12" fill="#c2e"/>
<rect x="1197" y="464" width="12" height="12" fill="#e0e"/>
<rect x="1209" y="464" width="12" height="12" fill="#e0d"/>
<rect x="1221" y="464" width="12" height="12" fill="#e0c"/>
<rect x="1233" y="464" width="12" height="12" fill="#906"/>
<rect x="1245" y="464" width="36" height="12" fill="#904"/>
<rect x="1281" y="464" width="48" height="12" fill="#903"/>
<rect x="1329" y="464" width="72" height="12" fill="#902"/>
<rect x="1401" y="464" width="188" height="12" fill="#900"/>
<rect x="969" y="476" width="60" height="12" fill="#039"/>
<rect x="1029" y="476" width="72" height="12" fill="#029"/>
<rect x="1101" y="476" width="12" height="12" fill="#03e"/>
<rect x="1113" y="476" width="12" height="12" fill="#22e"/>
<rect x="1125" y="476" width="12" height="12" fill="#32e"/>
<rect x="1137" y="476" width="12" height="12" fill="#42e"/>
<rect x="1149" y="476" width="12" height="12" fill="#62e"/>
<rect x="1161" y="476" width="12" height="12" fill="#90e"/>
<rect x="1173" y="476" width="12" height="12" fill="#a0e"/>
<rect x="1185" y="476" width="12" height="12" fill="#c0e"/>
<rect x="1197" y="476" width="12" height="12" fill="#e0e"/>
<rect x="1209" y="476" width="24" height="12" fill="#907"/>
<rect x="1233" y="476" width="12" height="12" fill="#906"/>
<rect x="1245" y="476" width="36" height="12" fill="#904"/>
<rect x="1281" y="476" width="48" height="12" fill="#903"/>
<rect x="1329" y="476" width="84" height="12" fill="#902"/>
<rect x="1413" y="476" width="176" height="12" fill="#900"/>
<rect x="969" y="488" width="120" height="12" fill="#029"/>
<rect x="1089" y="488" width="12" height="12" fill="#02e"/>
<rect x="1101" y="488" width="24" height="12" fill="#22e"/>
<rect x="1125" y="488" width="12" height="12" fill="#30e"/>
<rect x="1137" y="488" width="12" height="12" fill="#60e"/>
<rect x="1149" y="488" width="12" height="12" fill="#70e"/>
<rect x="1161" y="488" width="12" height="12" fill="#90e"/>
<rect x="1173" y="488" width="12" height="12" fill="#609"/>
<rect x="1185" y="488" width="12" height="12" fill="#709"/>
<rect x="1197" y="488" width="12" height="12" fill="#909"/>
<rect x="1209" y="488" width="24" height="12" fill="#907"/>
<rect x="1233" y="488" width="24" height="12" fill="#906"/>
<rect x="1257" y="488" width="36" height="12" fill="#904"/>
<rect x="1293" y="488" width="48" height="12" fill="#903"/>
<rect x="1341" y="488" width="84" height="12" fill="#902"/>
<rect x="1425" y="488" width="164" height="12" fill="#900"/>
<rect x="969" y="500" width="84" height="12" fill="#029"/>
<rect x="1053" y="500" width="36" height="12" fill="#009"/>
<rect x="1089" y="500" width="12" height="12" fill="#00e"/>
<rect x="1101" y="500" width="12" height="12" fill="#20e"/>
<rect x="1113" y="500" width="12" height="12" fill="#30e"/>
<rect x="1125" y="500" width="12" height="12" fill="#40e"/>
<rect x="1137" y="500" width="12" height="12" fill="#309"/>
<rect x="1149" y="500" width="24" height="12" fill="#409"/>
<rect x="1173" y="500" width="12" height="12" fill="#609"/>
<rect x="1185" y="500" width="12" height="12" fill="#709"/>
<rect x="1197" y="500" width="12" height="12" fill="#909"/>
<rect x="1209" y="500" width="24" height="12" fill="#907"/>
<rect x="1233" y="500" width="24" height="12" fill="#906"/>
<rect x="1257" y="500" width="36" height="12" fill="#904"/>
<rect x="1293" y="500" width="48" height="12" fill="#903"/>
<rect x="1341" y="500" width="96" height="12" fill="#902"/>
<rect x="1437" y="500" width="152" height="12" fill="#900"/>
<rect x="969" y="512" width="36" height="12" fill="#029"/>
<rect x="1005" y="512" width="84" height="12" fill="#009"/>
<rect x="1089" y="512" width="12" height="12" fill="#00e"/>
<rect x="1101" y="512" width="12" height="12" fill="#20e"/>
<rect x="1113" y="512" width="12" height="12" fill="#209"/>
<rect x="1125" y="512" width="24" height="12" fill="#309"/>
<rect x="1149" y="512" width="24" height="12" fill="#409"/>
<rect x="1173" y="512" width="12" height="12" fill="#609"/>
<rect x="1185" y="512" width="12" height="12" fill="#709"/>
<rect x="1197" y="512" width="12" height="12" fill="#909"/>
<rect x="1209" y="512" width="24" height="12" fill="#907"/>
<rect x="1233" y="512" width="24" height="12" fill="#906"/>
<rect x="1257" y="512" width="36" height="12" fill="#904"/>
<rect x="1293" y="512" width="60" height="12" fill="#903"/>
<rect x="1353" y="512" width="96" height="12" fill="#902"/>
<rect x="1449" y="512" width="140" height="12" fill="#900"/>
<rect x="969" y="524" width="132" height="12" fill="#009"/>
<rect x="1101" y="524" width="24" height="12" fill="#209"/>
<rect x="1125" y="524" width="24" height="12" fill="#309"/>
<rect x="1149" y="524" width="24" height="12" fill="#409"/>
<rect x="1173" y="524" width="12" height="12" fill="#609"/>
<rect x="1185" y="524" width="12" height="12" fill="#709"/>
<rect x="1197" y="524" width="24" height="12" fill="#909"/>
<rect x="1221" y="524" width="12" height="12" fill="#907"/>
<rect x="1233" y="524" width="24" height="12" fill="#906"/>
<rect x="1257" y="524" width="48" height="12" fill="#904"/>
<rect x="1305" y="524" width="60" height="12" fill="#903"/>
<rect x="1365" y="524" width="96" height="12" fill="#902"/>
<rect x="1461" y="524" width="128" height="12" fill="#900"/>
<rect x="969" y="536" width="132" height="12" fill="#009"/>
<rect x="1101" y="536" width="24" height="12" fill="#209"/>
<rect x="1125" y="536" width="24" height="12" fill="#309"/>
<rect x="1149" y="536" width="12" height="12" fill="#409"/>
<rect x="1161" y="536" width="24" height="12" fill="#609"/>
<rect x="1185" y="536" width="24" height="12" fill="#709"/>
<rect x="1209" y="536" width="12" height="12" fill="#909"/>
<rect x="1221" y="536" width="12" height="12" fill="#907"/>
<rect x="1233" y="536" width="36" height="12" fill="#906"/>
<rect x="1269" y="536" width="36" height="12" fill="#904"/>
<rect x="1305" y="536" width="60" height="12" fill="#903"/>
<rect x="1365" y="536" width="108" height="12" fill="#902"/>
<rect x="1473" y="536" width="116" height="12" fill="#900"/>
<rect x="969" y="548" width="132" height="12" fill="#009"/>
<rect x="1101" y="548" width="24" height="12" fill="#209"/>
<rect x="1125" y="548" width="24" height="12" fill="#309"/>
<rect x="1149" y="548" width="12" height="12" fill="#409"/>
<rect x="1161" y="548" width="24" height="12" fill="#609"/>
<rect x="1185" y="548" width="24" height="12" fill="#709"/>
<rect x="1209" y="548" width="12" height="12" fill="#909"/>
<rect x="1221" y="548" width="24" height="12" fill="#907"/>
<rect x="1245" y="548" width="24" height="12" fill="#906"/>
<rect x="1269" y="548" width="48" height="12" fill="#904"/>
<rect x="1317" y="548" width="60" height="12" fill="#903"/>
<rect x="1377" y="548" width="108" height="12" fill="#902"/>
<rect x="1485" y="548" width="104" height="12" fill="#900"/>
<rect x="969" y="560" width="120" height="1" fill="#009"/>
<rect x="1089" y="560" width="36" height="1" fill="#209"/>
<rect x="1125" y="560" width="24" height="1" fill="#309"/>
<rect x="1149" y="560" width="12" height="1" fill="#409"/>
<rect x="1161" y="560" width="24" height="1" fill="#609"/>
<rect x="1185" y="560" width="24" height="1" fill="#709"/>
<rect x="1209" y="560" width="12" height="1" fill="#909"/>
<rect x="1221" y="560" width="24" height="1" fill="#907"/>
<rect x="1245" y="560" width="24" height="1" fill="#906"/>
<rect x="1269" y="560" width="48" height="1" fill="#904"/>
<rect x="1317" y="560" width="60" height="1" fill="#903"/>
<rect x="1377" y="560" width="120" height="1" fill="#902"/>
<rect x="1497" y="560" width="92" height="1" fill="#900"/>
</g>
<clipPath id="clB"><path d="M450.8 1848.2L450.7 1848.2L450.7 1848.2L450.7 1848.2L450.6 1848.2L450.6 1848.2L450.5 1848.2L450.4 1848.2L450.3 1848.2L450.3 1848.2L450.2 1848.2L450.1 1848.3L450.0 1848.3L449.8 1848.4L449.7 1848.4L449.6 1848.5L449.5 1848.5L449.4 1848.5L449.3 1848.5L449.2 1848.5L449.1 1848.5L449.0 1848.5L448.9 1848.5L448.8 1848.5L448.7 1848.5L448.5 1848.5L448.4 1848.6L448.2 1848.6L448.1 1848.7L447.9 1848.7L447.7 1848.8L447.6 1848.8L447.4 1848.8L447.3 1848.8L447.1 1848.9L447.0 1848.9L446.8 1848.9L446.7 1848.8L446.5 1848.8L446.3 1848.8L446.2 1848.8L446.0 1848.8L445.8 1848.8L445.6 1848.8L445.4 1848.8L445.2 1848.8L444.9 1848.8L444.7 1848.8L444.5 1848.8L444.3 1848.8L444.0 1848.9L443.8 1848.9L443.5 1848.9L443.3 1848.9L443.0 1848.9L442.7 1848.9L442.4 1848.8L442.1 1848.8L441.8 1848.7L441.4 1848.6L441.1 1848.5L440.7 1848.4L440.3 1848.2L439.9 1848.0L439.5 1847.8L439.0 1847.6L438.5 1847.4L437.9 1847.1L437.3 1846.9L436.8 1846.6L436.1 1846.3L435.5 1845.9L434.9 1845.6L434.2 1845.2L433.5 1844.8L432.9 1844.4L432.2 1844.0L431.4 1843.5L430.7 1843.0L429.9 1842.5L429.0 1842.0L428.1 1841.4L427.1 1840.8L426.1 1840.1L425.1 1839.4L424.0 1838.7L422.9 1838.0L421.8 1837.2L420.6 1836.4L419.4 1835.6L418.2 1834.7L417.0 1833.8L415.7 1832.9L414.4 1832.0L413.1 1831.0L411.7 1830.0L410.2 1828.9L408.6 1827.8L407.1 1826.8L405.5 1825.6L403.8 1824.5L402.1 1823.3L400.2 1822.1L398.3 1820.8L396.4 1819.4L394.3 1818.0L392.1 1816.6L389.9 1815.1L387.5 1813.5L385.1 1811.9L382.7 1810.2L380.1 1808.5L377.5 1806.7L374.9 1804.9L372.1 1803.0L369.3 1801.1L366.5 1799.2L363.5 1797.1L360.5 1795.0L357.3 1792.8L354.1 1790.4L350.7 1787.9L347.3 1785.4L343.8 1782.7L340.2 1780.0L336.5 1777.1L332.7 1774.1L328.8 1770.9L324.8 1767.5L320.7 1764.0L316.6 1760.5L312.4 1756.9L308.2 1753.1L303.7 1749.0L299.1 1744.5L294.3 1739.6L289.2 1734.2L283.9 1728.3L278.4 1722.2L272.8 1715.7L266.9 1708.8L260.9 1701.4L254.6 1693.5L248.2 1685.0L241.5 1675.7L234.7 1666.0L227.6 1655.9L220.4 1645.3L213.0 1634.1L205.3 1622.2L197.4 1609.4L189.3 1595.8L180.8 1581.0L172.1 1565.4L163.2 1549.1L154.1 1532.0L144.6 1514.1L135.0 1495.1L125.0 1475.0L114.8 1453.7L104.2 1431.1L93.3 1407.4L81.9 1382.7L70.2 1356.9L58.3 1330.0L46.1 1301.8L33.9 1272.3L21.7 1241.4L9.7 1209.1L-2.4 1175.2L-14.7 1139.9L-27.0 1103.2L-39.3 1065.2L-51.6 1026.0L-63.8 985.5L-75.9 943.9L-87.9 901.1L-99.8 856.9L-111.8 811.0L-123.9 763.7L-135.8 715.3L-147.4 666.2L-158.7 616.5L-169.4 566.6L-179.5 516.7L-189.2 466.5L-198.5 415.2L-207.6 363.4L-216.1 311.2L-224.1 259.1L-231.4 207.3L-237.9 156.3L-243.5 106.2L-248.4 56.8L-252.7 7.5L-256.3 -41.5L-259.2 -90.0L-261.2 -137.7L-262.3 -184.4L-262.5 -229.9L-261.5 -273.9L-259.6 -316.9L-256.8 -359.2L-253.0 -400.6L-248.3 -440.8L-242.6 -479.7L-236.0 -516.9L-228.3 -552.2L-219.7 -585.4L-209.9 -616.8L-199.0 -646.7L-187.0 -674.9L-174.0 -701.4L-160.2 -726.0L-145.8 -748.6L-130.7 -769.0L-115.1 -787.3L-98.8 -803.1L-81.5 -816.5L-63.5 -827.7L-44.9 -837.0L-25.8 -844.5L-6.3 -850.5L13.4 -855.0L33.1 -858.5L53.0 -860.2L73.5 -860.0L94.2 -858.0L115.2 -854.6L136.4 -850.2L157.7 -845.0L179.0 -839.4L200.1 -833.6L221.2 -827.4L242.5 -820.3L263.9 -812.4L285.3 -803.9L306.6 -795.0L327.8 -785.8L348.8 -776.5L369.6 -767.3L390.1 -758.1L410.4 -748.6L430.5 -739.0L450.5 -729.1L470.4 -719.0L490.1 -708.8L509.8 -698.5L529.4 -688.0L549.0 -677.4L568.3 -666.6L587.6 -655.7L606.8 -644.6L625.9 -633.3L644.9 -622.0L664.0 -610.5L683.0 -598.8L702.1 -587.0L721.1 -575.1L740.1 -563.0L759.0 -550.8L777.9 -538.5L796.8 -526.0L815.7 -513.5L834.5 -500.9L853.4 -488.1L872.1 -475.3L890.9 -462.3L909.6 -449.3L928.3 -436.2L947.0 -423.0L965.7 -409.7L984.4 -396.4L1003.1 -383.0L1021.7 -369.5L1040.4 -355.9L1059.1 -342.3L1077.7 -328.6L1096.4 -314.9L1115.1 -301.1L1133.8 -287.3L1152.5 -273.4L1171.2 -259.5L1190.0 -245.5L1208.7 -231.4L1227.5 -217.3L1246.2 -203.2L1264.9 -189.1L1283.6 -174.9L1302.3 -160.8L1320.9 -146.6L1339.6 -132.3L1358.2 -118.1L1376.8 -103.8L1395.4 -89.5L1414.0 -75.2L1432.6 -61.0L1451.2 -46.7L1469.8 -32.4L1488.3 -18.2L1506.9 -3.9L1525.4 10.4L1543.9 24.6L1562.4 38.8L1580.7 53.0L1599.1 67.2L1617.4 81.3L1635.6 95.5L1653.8 109.6L1671.9 123.7L1690.0 137.7L1708.0 151.7L1726.0 165.7L1743.8 179.6L1761.7 193.4L1779.4 207.2L1797.1 221.0L1814.7 234.7L1832.3 248.4L1849.7 261.9L1867.0 275.4L1884.2 288.8L1901.4 302.2L1918.5 315.5L1935.5 328.7L1952.3 341.8L1969.1 354.8L1985.7 367.8L2002.2 380.6L2018.5 393.3L2034.8 405.9L2051.0 418.4L2067.0 430.8L2082.9 443.1L2098.6 455.3L2114.1 467.3L2129.4 479.2L2144.5 491.0L2159.5 502.7L2174.4 514.2L2189.0 525.7L2203.5 537.0L2217.7 548.1L2231.6 559.0L2245.3 569.6L2258.8 580.1L2271.9 590.3L2284.8 600.3L2297.5 610.2L2309.9 619.9L2322.2 629.4L2334.3 638.8L2346.2 648.0L2358.0 657.2L2369.6 666.2L2381.0 675.1L2392.3 683.8L2403.3 692.4L2414.1 700.8L2424.6 709.0L2434.9 716.9L2444.9 724.7L2454.7 732.2L2464.3 739.6L2473.6 746.7L2482.6 753.7L2491.5 760.5L2500.1 767.2L2508.6 773.8L2516.8 780.1L2524.8 786.4L2532.6 792.4L2540.1 798.3L2547.5 804.1L2554.6 809.7L2561.6 815.1L2568.4 820.5L2575.0 825.6L2581.4 830.6L2587.6 835.5L2593.6 840.2L2599.5 844.7L2605.2 849.1L2610.7 853.5L2616.1 857.7L2621.4 861.8L2626.5 865.7L2631.5 869.5L2636.3 873.2L2640.9 876.8L2645.5 880.3L2649.9 883.7L2654.2 887.1L2658.4 890.3L2662.5 893.5L2666.5 896.6L2670.3 899.6L2674.0 902.5L2677.7 905.4L2681.2 908.2L2684.8 910.9L2688.2 913.6L2691.6 916.3L2694.9 918.8L2698.1 921.3L2701.3 923.8L2704.4 926.2L2707.4 928.5L2710.3 930.8L2713.2 933.1L2716.0 935.3L2718.7 937.4L2721.3 939.4L2723.9 941.5L2726.4 943.4L2728.8 945.3L2731.2 947.2L2733.6 948.9L2735.8 950.7L2738.0 952.3L2740.1 953.9L2742.2 955.5L2744.2 957.0L2746.1 958.5L2748.0 959.9L2749.8 961.3L2751.5 962.6L2753.1 963.9L2754.7 965.1L2756.2 966.3L2757.7 967.5L2759.1 968.6L2760.5 969.7L2761.9 970.8L2763.2 971.8L2764.5 972.8L2765.7 973.7L2766.9 974.6L2768.0 975.5L2769.1 976.4L2770.2 977.2L2771.1 977.9L2771.8 978.5L2772.5 979.0L2773.1 979.5L2773.8 980.0L2774.7 980.7L2775.8 981.6L2777.3 982.8L2779.3 984.3L2781.8 986.3L2784.6 988.5L2787.5 990.8L2790.5 993.0L2793.1 995.1L2795.3 996.9L2796.9 998.1Z"/></clipPath>
<g clip-path="url(#clB)" shape-rendering="crispEdges">
<rect x="1374" y="134" width="48" height="12" fill="#690"/>
<rect x="1422" y="134" width="84" height="12" fill="#790"/>
<rect x="1506" y="134" width="60" height="12" fill="#990"/>
<rect x="1566" y="134" width="16" height="12" fill="#970"/>
<rect x="1374" y="146" width="36" height="12" fill="#690"/>
<rect x="1410" y="146" width="84" height="12" fill="#790"/>
<rect x="1494" y="146" width="60" height="12" fill="#990"/>
<rect x="1554" y="146" width="28" height="12" fill="#970"/>
<rect x="1374" y="158" width="12" height="12" fill="#ae0"/>
<rect x="1386" y="158" width="12" height="12" fill="#ce0"/>
<rect x="1398" y="158" width="84" height="12" fill="#790"/>
<rect x="1482" y="158" width="60" height="12" fill="#990"/>
<rect x="1542" y="158" width="40" height="12" fill="#970"/>
<rect x="1374" y="170" width="36" height="12" fill="#ce0"/>
<rect x="1410" y="170" width="72" height="12" fill="#790"/>
<rect x="1482" y="170" width="60" height="12" fill="#990"/>
<rect x="1542" y="170" width="40" height="12" fill="#970"/>
<rect x="1374" y="182" width="48" height="12" fill="#ce0"/>
<rect x="1422" y="182" width="12" height="12" fill="#de0"/>
<rect x="1434" y="182" width="36" height="12" fill="#790"/>
<rect x="1470" y="182" width="60" height="12" fill="#990"/>
<rect x="1530" y="182" width="52" height="12" fill="#970"/>
<rect x="1374" y="194" width="36" height="12" fill="#ce0"/>
<rect x="1410" y="194" width="48" height="12" fill="#de0"/>
<rect x="1458" y="194" width="60" height="12" fill="#990"/>
<rect x="1518" y="194" width="64" height="12" fill="#970"/>
<rect x="1374" y="206" width="24" height="12" fill="#ce0"/>
<rect x="1398" y="206" width="48" height="12" fill="#de0"/>
<rect x="1446" y="206" width="24" height="12" fill="#ee0"/>
<rect x="1470" y="206" width="36" height="12" fill="#990"/>
<rect x="1506" y="206" width="76" height="12" fill="#970"/>
<rect x="1374" y="218" width="24" height="12" fill="#ce0"/>
<rect x="1398" y="218" width="48" height="12" fill="#de0"/>
<rect x="1446" y="218" width="48" height="12" fill="#ee0"/>
<rect x="1494" y="218" width="88" height="12" fill="#970"/>
<rect x="1374" y="230" width="12" height="12" fill="#ce0"/>
<rect x="1386" y="230" width="48" height="12" fill="#de0"/>
<rect x="1434" y="230" width="60" height="12" fill="#ee0"/>
<rect x="1494" y="230" width="12" height="12" fill="#ed0"/>
<rect x="1506" y="230" width="72" height="12" fill="#970"/>
<rect x="1578" y="230" width="4" height="12" fill="#960"/>
<rect x="1374" y="242" width="48" height="12" fill="#de0"/>
<rect x="1422" y="242" width="60" height="12" fill="#ee0"/>
<rect x="1482" y="242" width="48" height="12" fill="#ed0"/>
<rect x="1530" y="242" width="48" height="12" fill="#970"/>
<rect x="1578" y="242" width="4" height="12" fill="#960"/>
<rect x="1374" y="254" width="36" height="12" fill="#de0"/>
<rect x="1410" y="254" width="60" height="12" fill="#ee0"/>
<rect x="1470" y="254" width="48" height="12" fill="#ed0"/>
<rect x="1518" y="254" width="36" height="12" fill="#ec0"/>
<rect x="1554" y="254" width="12" height="12" fill="#970"/>
<rect x="1566" y="254" width="16" height="12" fill="#960"/>
<rect x="1374" y="266" width="36" height="12" fill="#de0"/>
<rect x="1410" y="266" width="48" height="12" fill="#ee0"/>
<rect x="1458" y="266" width="60" height="12" fill="#ed0"/>
<rect x="1518" y="266" width="48" height="12" fill="#ec0"/>
<rect x="1566" y="266" width="16" height="12" fill="#960"/>
<rect x="1374" y="278" width="12" height="12" fill="#de2"/>
<rect x="1386" y="278" width="12" height="12" fill="#de0"/>
<rect x="1398" y="278" width="48" height="12" fill="#ee0"/>
<rect x="1446" y="278" width="60" height="12" fill="#ed0"/>
<rect x="1506" y="278" width="60" height="12" fill="#ec0"/>
<rect x="1566" y="278" width="16" height="12" fill="#ea0"/>
<rect x="1374" y="290" width="12" height="5" fill="#de2"/>
<rect x="1386" y="290" width="24" height="5" fill="#ee2"/>
<rect x="1410" y="290" width="36" height="5" fill="#ee0"/>
<rect x="1446" y="290" width="48" height="5" fill="#ed0"/>
<rect x="1494" y="290" width="60" height="5" fill="#ec0"/>
<rect x="1554" y="290" width="28" height="5" fill="#ea0"/>
</g>
</svg>
<canvas id="cv" width="1600" height="870"></canvas>
<svg id="fg" width="1600" height="870" font-family="Liberation Sans, sans-serif">
<defs>
<linearGradient id="rainbow" x1="0" x2="1" y1="0" y2="0">
<stop offset="0" stop-color="#00ff00"/><stop offset="0.18" stop-color="#ffff00"/><stop offset="0.38" stop-color="#ff0000"/>
<stop offset="0.57" stop-color="#ff00ff"/><stop offset="0.78" stop-color="#0000ff"/><stop offset="1" stop-color="#00ffff"/></linearGradient>
<linearGradient id="gbtn" x1="0" x2="0" y1="0" y2="1"><stop offset="0" stop-color="#6fe24c"/><stop offset="1" stop-color="#18b818"/></linearGradient>
<linearGradient id="graybtn" x1="0" x2="0" y1="0" y2="1"><stop offset="0" stop-color="#a8a8a8"/><stop offset="1" stop-color="#5a5a5a"/></linearGradient>
<linearGradient id="dd" x1="0" x2="0" y1="0" y2="1"><stop offset="0" stop-color="#5a5a5a"/><stop offset="1" stop-color="#6e6e6e"/></linearGradient>
<linearGradient id="knob" x1="0" x2="0" y1="0" y2="1"><stop offset="0" stop-color="#3c3c3c"/><stop offset="1" stop-color="#858585"/></linearGradient>
<linearGradient id="ystripe" x1="0" x2="0" y1="0" y2="1"><stop offset="0" stop-color="#ffff00"/><stop offset="1" stop-color="#d4d400"/></linearGradient>
<linearGradient id="gstripe" x1="0" x2="0" y1="0" y2="1"><stop offset="0" stop-color="#00f000"/><stop offset="1" stop-color="#00c800"/></linearGradient>
<linearGradient id="ybar" x1="0" x2="0" y1="0" y2="1"><stop offset="0" stop-color="#d8d840"/><stop offset="0.35" stop-color="#c4c400"/><stop offset="0.6" stop-color="#b8b800"/><stop offset="1" stop-color="#5a5a00"/></linearGradient>
<linearGradient id="rbar" x1="0" x2="0" y1="0" y2="1"><stop offset="0" stop-color="#ff3030"/><stop offset="0.5" stop-color="#f00000"/><stop offset="1" stop-color="#800000"/></linearGradient>
<linearGradient id="gbar" x1="0" x2="0" y1="0" y2="1"><stop offset="0" stop-color="#10a010"/><stop offset="0.5" stop-color="#008000"/><stop offset="1" stop-color="#004000"/></linearGradient>
<linearGradient id="bbar" x1="0" x2="0" y1="0" y2="1"><stop offset="0" stop-color="#3030ff"/><stop offset="0.5" stop-color="#0000f0"/><stop offset="1" stop-color="#000070"/></linearGradient>
<linearGradient id="thdr" x1="0" x2="0" y1="0" y2="1"><stop offset="0" stop-color="#2a2a2a"/><stop offset="0.5" stop-color="#1e1e1e"/><stop offset="1" stop-color="#050505"/></linearGradient>
<linearGradient id="pbtn" x1="0" x2="0" y1="0" y2="1"><stop offset="0" stop-color="#a6a6a6"/><stop offset="0.55" stop-color="#8a8a8a"/><stop offset="1" stop-color="#505050"/></linearGradient>
</defs>
<rect x="0" y="0" width="1600" height="23" fill="#0399bf"/>
<circle cx="10.3" cy="11" r="7.3" fill="#0a0a0a" stroke="url(#rainbow)" stroke-width="1.3"/>
<text x="10.3" y="14.2" font-size="8.5" fill="#fff" text-anchor="middle" font-weight="bold" textLength="11.5" lengthAdjust="spacingAndGlyphs">CM</text>
<text x="24" y="16" font-size="12" fill="#ffffff" textLength="335" lengthAdjust="spacingAndGlyphs">CalMAN 2016 CalMAN Ultimate for Business 51 Days Remaining</text>
<line x1="1479" y1="10.5" x2="1490" y2="10.5" stroke="#fff" stroke-width="1"/>
<rect x="1524.5" y="7.5" width="8" height="7" fill="none" stroke="#fff" stroke-width="1"/>
<path d="M1526.5 7.5 V5.5 H534.5" fill="none"/>
<path d="M1526.5 7.5V5.5H1534.5V12.5H1532.5" fill="none" stroke="#fff" stroke-width="1"/>
<path d="M1570 5L1580 15M1580 5L1570 15" stroke="#fff" stroke-width="1.1"/>
<rect x="0" y="23" width="1600" height="66" fill="#232323"/>
<rect x="190" y="35" width="1410" height="6" fill="url(#rainbow)"/>
<path d="M0 23H183V49Q183 53 179 53H4Q0 53 0 49Z" fill="url(#gbtn)" stroke="#d8f0d0" stroke-width="0.8"/>
<text x="12.5" y="48.3" font-size="30" fill="#ffffff" letter-spacing="3.7" stroke="#ffffff" stroke-width="1.4">CalMAN</text>
<linearGradient id="gknob" x1="0" x2="0" y1="0" y2="1"><stop offset="0" stop-color="#18bb18"/><stop offset="1" stop-color="#5ad85a"/></linearGradient>
<circle cx="166" cy="37" r="10" fill="url(#gknob)"/>
<path d="M161 36H171L166 41.4Z" fill="#fff"/>
<linearGradient id="tabg" x1="0" x2="0" y1="0" y2="1"><stop offset="0" stop-color="#454545"/><stop offset="1" stop-color="#333333"/></linearGradient>
<linearGradient id="pknob" x1="0" x2="0" y1="0" y2="1"><stop offset="0" stop-color="#555555"/><stop offset="1" stop-color="#8a8a8a"/></linearGradient>
<linearGradient id="hknob" x1="0" x2="0" y1="0" y2="1"><stop offset="0" stop-color="#2c2c2c"/><stop offset="1" stop-color="#444444"/></linearGradient>
<rect x="-3" y="58.5" width="29.5" height="27.5" rx="3" fill="url(#graybtn)" stroke="#d6d6d6"/>
<circle cx="13" cy="71.5" r="9.8" fill="url(#pknob)"/>
<path d="M10 66.4V76.5L15.5 71.5Z" fill="#fff"/>
<path d="M29.5 89V61.5Q29.5 58.5 32.5 58.5H118Q121 58.5 121 61.5V89" fill="url(#tabg)" stroke="#5e5e5e"/>
<line x1="87.5" y1="59" x2="87.5" y2="89" stroke="#5a5a5a" stroke-width="1"/>
<text x="35.5" y="78" font-size="11.5" fill="#dadada" textLength="46.5" lengthAdjust="spacingAndGlyphs">History 1</text>
<circle cx="103" cy="75" r="9.5" fill="url(#hknob)"/>
<text x="103" y="79.5" font-size="13" fill="#777777" text-anchor="middle">+</text>
<path d="M1058 88V61Q1058 58 1061 58H1210Q1213 58 1213 61V88Z" fill="url(#dd)"/>
<rect x="1058" y="59" width="6" height="29" fill="url(#gstripe)"/>
<text x="1067" y="70" font-size="11" fill="#e8e8e8" textLength="66" lengthAdjust="spacingAndGlyphs">X-Rite i1Pro 2</text>
<text x="1067" y="84" font-size="11" fill="#e8e8e8" textLength="77" lengthAdjust="spacingAndGlyphs">LCD Direct View</text>
<circle cx="1157" cy="73" r="9.5" fill="url(#knob)"/>
<path d="M1151.8 71.9H1162.2L1157 77.1Z" fill="#fff"/>
<line x1="1177.5" y1="61" x2="1177.5" y2="88" stroke="#4a4a4a" stroke-width="1"/>
<circle cx="1197" cy="73" r="12.5" fill="#0000ee" stroke="#ffffff" stroke-width="1"/>
<text x="1197" y="77" font-size="10" fill="#fff" text-anchor="middle" textLength="17" lengthAdjust="spacingAndGlyphs">229</text>
<path d="M1218 88V61Q1218 58 1221 58H1346Q1349 58 1349 61V88Z" fill="url(#dd)"/>
<rect x="1218" y="59" width="6" height="29" fill="url(#ystripe)"/>
<text x="1227" y="70" font-size="11" fill="#e8e8e8" textLength="33" lengthAdjust="spacingAndGlyphs">Source</text>
<circle cx="1332" cy="73" r="9.5" fill="url(#knob)"/>
<path d="M1326.8 71.9H1337.2L1332 77.1Z" fill="#fff"/>
<path d="M1355 88V61Q1355 58 1358 58H1495Q1498 58 1498 61V88Z" fill="url(#dd)"/>
<rect x="1355" y="59" width="6" height="29" fill="url(#ystripe)"/>
<text x="1364" y="70" font-size="11" fill="#e8e8e8" textLength="106" lengthAdjust="spacingAndGlyphs">Direct Display Control</text>
<circle cx="1482" cy="73" r="9.5" fill="url(#knob)"/>
<path d="M1476.8 71.9H1487.2L1482 77.1Z" fill="#fff"/>
<rect x="1501.5" y="58.5" width="33" height="28" rx="4" fill="url(#graybtn)" stroke="#cfcfcf"/>
<circle cx="1518.0" cy="72" r="10" fill="url(#knob)"/>
<g transform="translate(1518 72)" fill="none" stroke="#e0e0e0" stroke-width="2.2"><circle r="4.5"/><line x1="0" y1="5" x2="0" y2="7.5" transform="rotate(0)"/><line x1="0" y1="5" x2="0" y2="7.5" transform="rotate(45)"/><line x1="0" y1="5" x2="0" y2="7.5" transform="rotate(90)"/><line x1="0" y1="5" x2="0" y2="7.5" transform="rotate(135)"/><line x1="0" y1="5" x2="0" y2="7.5" transform="rotate(180)"/><line x1="0" y1="5" x2="0" y2="7.5" transform="rotate(225)"/><line x1="0" y1="5" x2="0" y2="7.5" transform="rotate(270)"/><line x1="0" y1="5" x2="0" y2="7.5" transform="rotate(315)"/></g>
<rect x="1537.5" y="58.5" width="33" height="28" rx="4" fill="url(#graybtn)" stroke="#cfcfcf"/>
<circle cx="1554.0" cy="72" r="10" fill="url(#knob)"/>
<text x="1554" y="78.5" font-size="17" fill="#e8e8e8" text-anchor="middle" font-weight="bold">?</text>
<rect x="1573.5" y="58.5" width="30" height="28" rx="4" fill="url(#graybtn)" stroke="#cfcfcf"/>
<circle cx="1587" cy="72" r="10" fill="url(#knob)"/>
<path d="M1589 66V78L1583 72Z" fill="#fff"/>
<rect x="0" y="89" width="1.2" height="719" fill="#222222"/>
<rect x="1599" y="89" width="1" height="719" fill="#282828"/>
<text x="23.5" y="140" font-size="33" fill="#ececec" textLength="311" lengthAdjust="spacingAndGlyphs" stroke="#ececec" stroke-width="0.5">Saturation Sweeps</text>
<rect x="42" y="188.5" width="298" height="364.0" fill="#232323"/>
<line x1="81.6" y1="188.5" x2="81.6" y2="552.5" stroke="#8c8c8c" stroke-width="1.2"/>
<line x1="121.2" y1="188.5" x2="121.2" y2="552.5" stroke="#8c8c8c" stroke-width="1.2"/>
<line x1="160.8" y1="188.5" x2="160.8" y2="552.5" stroke="#8c8c8c" stroke-width="1.2"/>
<line x1="200.4" y1="188.5" x2="200.4" y2="552.5" stroke="#8c8c8c" stroke-width="1.2"/>
<line x1="240.0" y1="188.5" x2="240.0" y2="552.5" stroke="#8c8c8c" stroke-width="1.2"/>
<line x1="279.6" y1="188.5" x2="279.6" y2="552.5" stroke="#8c8c8c" stroke-width="1.2"/>
<line x1="319.2" y1="188.5" x2="319.2" y2="552.5" stroke="#8c8c8c" stroke-width="1.2"/>
<text x="174" y="184" font-size="13" fill="#d8d8d8" text-anchor="middle" textLength="77" lengthAdjust="spacingAndGlyphs">DeltaE 2000</text>
<line x1="36" y1="188.5" x2="42" y2="188.5" stroke="#bdbdbd" stroke-width="1.5"/>
<line x1="36" y1="249.16666666666666" x2="42" y2="249.16666666666666" stroke="#bdbdbd" stroke-width="1.5"/>
<line x1="36" y1="309.8333333333333" x2="42" y2="309.8333333333333" stroke="#bdbdbd" stroke-width="1.5"/>
<line x1="36" y1="370.5" x2="42" y2="370.5" stroke="#bdbdbd" stroke-width="1.5"/>
<line x1="36" y1="431.16666666666663" x2="42" y2="431.16666666666663" stroke="#bdbdbd" stroke-width="1.5"/>
<line x1="36" y1="491.8333333333333" x2="42" y2="491.8333333333333" stroke="#bdbdbd" stroke-width="1.5"/>
<line x1="36" y1="552.5" x2="42" y2="552.5" stroke="#bdbdbd" stroke-width="1.5"/>
<line x1="42.0" y1="552.5" x2="42.0" y2="557.5" stroke="#bdbdbd" stroke-width="1.5"/>
<text x="42.0" y="572" font-size="12.5" fill="#d4d4d4" text-anchor="middle">0</text>
<line x1="81.6" y1="552.5" x2="81.6" y2="557.5" stroke="#bdbdbd" stroke-width="1.5"/>
<text x="81.6" y="572" font-size="12.5" fill="#d4d4d4" text-anchor="middle">2</text>
<line x1="121.2" y1="552.5" x2="121.2" y2="557.5" stroke="#bdbdbd" stroke-width="1.5"/>
<text x="121.2" y="572" font-size="12.5" fill="#d4d4d4" text-anchor="middle">4</text>
<line x1="160.8" y1="552.5" x2="160.8" y2="557.5" stroke="#bdbdbd" stroke-width="1.5"/>
<text x="160.8" y="572" font-size="12.5" fill="#d4d4d4" text-anchor="middle">6</text>
<line x1="200.4" y1="552.5" x2="200.4" y2="557.5" stroke="#bdbdbd" stroke-width="1.5"/>
<text x="200.4" y="572" font-size="12.5" fill="#d4d4d4" text-anchor="middle">8</text>
<line x1="240.0" y1="552.5" x2="240.0" y2="557.5" stroke="#bdbdbd" stroke-width="1.5"/>
<text x="240.0" y="572" font-size="12.5" fill="#d4d4d4" text-anchor="middle">10</text>
<line x1="279.6" y1="552.5" x2="279.6" y2="557.5" stroke="#bdbdbd" stroke-width="1.5"/>
<text x="279.6" y="572" font-size="12.5" fill="#d4d4d4" text-anchor="middle">12</text>
<line x1="319.2" y1="552.5" x2="319.2" y2="557.5" stroke="#bdbdbd" stroke-width="1.5"/>
<text x="319.2" y="572" font-size="12.5" fill="#d4d4d4" text-anchor="middle">14</text>
<text x="41" y="224.5" font-size="13" fill="#d4d4d4" text-anchor="end">100%</text>
<text x="41" y="285.16666666666663" font-size="13" fill="#d4d4d4" text-anchor="end">80%</text>
<text x="41" y="345.8333333333333" font-size="13" fill="#d4d4d4" text-anchor="end">60%</text>
<text x="41" y="406.5" font-size="13" fill="#d4d4d4" text-anchor="end">40%</text>
<text x="41" y="467.16666666666663" font-size="13" fill="#d4d4d4" text-anchor="end">20%</text>
<text x="41" y="527.8333333333333" font-size="13" fill="#d4d4d4" text-anchor="end">100</text>
<linearGradient id="eb00" x1="0" x2="1"><stop offset="0" stop-color="rgb(225, 102, 102)"/><stop offset="0.5" stop-color="rgb(210, 20, 20)"/><stop offset="1" stop-color="rgb(94, 9, 9)"/></linearGradient>
<rect x="42.8" y="194.5" width="59.4" height="6.2" fill="url(#eb00)" stroke="#000" stroke-width="1.2"/>
<linearGradient id="eb01" x1="0" x2="1"><stop offset="0" stop-color="rgb(102, 212, 102)"/><stop offset="0.5" stop-color="rgb(20, 190, 20)"/><stop offset="1" stop-color="rgb(9, 85, 9)"/></linearGradient>
<rect x="42.8" y="201.7" width="57.4" height="6.2" fill="url(#eb01)" stroke="#000" stroke-width="1.2"/>
<linearGradient id="eb02" x1="0" x2="1"><stop offset="0" stop-color="rgb(102, 102, 219)"/><stop offset="0.5" stop-color="rgb(20, 20, 200)"/><stop offset="1" stop-color="rgb(9, 9, 90)"/></linearGradient>
<rect x="42.8" y="208.9" width="35.6" height="6.2" fill="url(#eb02)" stroke="#000" stroke-width="1.2"/>
<linearGradient id="eb03" x1="0" x2="1"><stop offset="0" stop-color="rgb(102, 212, 212)"/><stop offset="0.5" stop-color="rgb(20, 190, 190)"/><stop offset="1" stop-color="rgb(9, 85, 85)"/></linearGradient>
<rect x="42.8" y="216.1" width="57.4" height="6.2" fill="url(#eb03)" stroke="#000" stroke-width="1.2"/>
<linearGradient id="eb04" x1="0" x2="1"><stop offset="0" stop-color="rgb(219, 102, 219)"/><stop offset="0.5" stop-color="rgb(200, 20, 200)"/><stop offset="1" stop-color="rgb(90, 9, 90)"/></linearGradient>
<rect x="42.8" y="223.3" width="65.3" height="6.2" fill="url(#eb04)" stroke="#000" stroke-width="1.2"/>
<linearGradient id="eb05" x1="0" x2="1"><stop offset="0" stop-color="rgb(219, 212, 102)"/><stop offset="0.5" stop-color="rgb(200, 190, 20)"/><stop offset="1" stop-color="rgb(90, 85, 9)"/></linearGradient>
<rect x="42.8" y="230.5" width="81.2" height="6.2" fill="url(#eb05)" stroke="#000" stroke-width="1.2"/>
<linearGradient id="eb10" x1="0" x2="1"><stop offset="0" stop-color="rgb(223, 131, 131)"/><stop offset="0.5" stop-color="rgb(207, 65, 65)"/><stop offset="1" stop-color="rgb(93, 29, 29)"/></linearGradient>
<rect x="42.8" y="255.2" width="61.4" height="6.2" fill="url(#eb10)" stroke="#000" stroke-width="1.2"/>
<linearGradient id="eb11" x1="0" x2="1"><stop offset="0" stop-color="rgb(131, 214, 131)"/><stop offset="0.5" stop-color="rgb(65, 192, 65)"/><stop offset="1" stop-color="rgb(29, 86, 29)"/></linearGradient>
<rect x="42.8" y="262.4" width="55.4" height="6.2" fill="url(#eb11)" stroke="#000" stroke-width="1.2"/>
<linearGradient id="eb12" x1="0" x2="1"><stop offset="0" stop-color="rgb(131, 131, 219)"/><stop offset="0.5" stop-color="rgb(65, 65, 200)"/><stop offset="1" stop-color="rgb(29, 29, 90)"/></linearGradient>
<rect x="42.8" y="269.6" width="10.9" height="6.2" fill="url(#eb12)" stroke="#000" stroke-width="1.2"/>
<linearGradient id="eb13" x1="0" x2="1"><stop offset="0" stop-color="rgb(131, 214, 214)"/><stop offset="0.5" stop-color="rgb(65, 192, 192)"/><stop offset="1" stop-color="rgb(29, 86, 86)"/></linearGradient>
<rect x="42.8" y="276.8" width="57.4" height="6.2" fill="url(#eb13)" stroke="#000" stroke-width="1.2"/>
<linearGradient id="eb14" x1="0" x2="1"><stop offset="0" stop-color="rgb(219, 131, 219)"/><stop offset="0.5" stop-color="rgb(200, 65, 200)"/><stop offset="1" stop-color="rgb(90, 29, 90)"/></linearGradient>
<rect x="42.8" y="284.0" width="57.4" height="6.2" fill="url(#eb14)" stroke="#000" stroke-width="1.2"/>
<linearGradient id="eb15" x1="0" x2="1"><stop offset="0" stop-color="rgb(219, 214, 131)"/><stop offset="0.5" stop-color="rgb(200, 192, 65)"/><stop offset="1" stop-color="rgb(90, 86, 29)"/></linearGradient>
<rect x="42.8" y="291.2" width="87.1" height="6.2" fill="url(#eb15)" stroke="#000" stroke-width="1.2"/>
<linearGradient id="eb20" x1="0" x2="1"><stop offset="0" stop-color="rgb(223, 149, 149)"/><stop offset="0.5" stop-color="rgb(206, 92, 92)"/><stop offset="1" stop-color="rgb(92, 41, 41)"/></linearGradient>
<rect x="42.8" y="315.8" width="63.4" height="6.2" fill="url(#eb20)" stroke="#000" stroke-width="1.2"/>
<linearGradient id="eb21" x1="0" x2="1"><stop offset="0" stop-color="rgb(149, 215, 149)"/><stop offset="0.5" stop-color="rgb(92, 194, 92)"/><stop offset="1" stop-color="rgb(41, 87, 41)"/></linearGradient>
<rect x="42.8" y="323.0" width="49.5" height="6.2" fill="url(#eb21)" stroke="#000" stroke-width="1.2"/>
<linearGradient id="eb22" x1="0" x2="1"><stop offset="0" stop-color="rgb(149, 149, 219)"/><stop offset="0.5" stop-color="rgb(92, 92, 200)"/><stop offset="1" stop-color="rgb(41, 41, 90)"/></linearGradient>
<rect x="42.8" y="330.2" width="26.7" height="6.2" fill="url(#eb22)" stroke="#000" stroke-width="1.2"/>
<linearGradient id="eb23" x1="0" x2="1"><stop offset="0" stop-color="rgb(149, 215, 215)"/><stop offset="0.5" stop-color="rgb(92, 194, 194)"/><stop offset="1" stop-color="rgb(41, 87, 87)"/></linearGradient>
<rect x="42.8" y="337.4" width="62.4" height="6.2" fill="url(#eb23)" stroke="#000" stroke-width="1.2"/>
<linearGradient id="eb24" x1="0" x2="1"><stop offset="0" stop-color="rgb(219, 149, 219)"/><stop offset="0.5" stop-color="rgb(200, 92, 200)"/><stop offset="1" stop-color="rgb(90, 41, 90)"/></linearGradient>
<rect x="42.8" y="344.6" width="67.3" height="6.2" fill="url(#eb24)" stroke="#000" stroke-width="1.2"/>
<linearGradient id="eb25" x1="0" x2="1"><stop offset="0" stop-color="rgb(219, 215, 149)"/><stop offset="0.5" stop-color="rgb(200, 194, 92)"/><stop offset="1" stop-color="rgb(90, 87, 41)"/></linearGradient>
<rect x="42.8" y="351.8" width="93.1" height="6.2" fill="url(#eb25)" stroke="#000" stroke-width="1.2"/>
<linearGradient id="eb30" x1="0" x2="1"><stop offset="0" stop-color="rgb(221, 166, 166)"/><stop offset="0.5" stop-color="rgb(204, 119, 119)"/><stop offset="1" stop-color="rgb(91, 53, 53)"/></linearGradient>
<rect x="42.8" y="376.5" width="79.2" height="6.2" fill="url(#eb30)" stroke="#000" stroke-width="1.2"/>
<linearGradient id="eb31" x1="0" x2="1"><stop offset="0" stop-color="rgb(166, 216, 166)"/><stop offset="0.5" stop-color="rgb(119, 195, 119)"/><stop offset="1" stop-color="rgb(53, 87, 53)"/></linearGradient>
<rect x="42.8" y="383.7" width="43.6" height="6.2" fill="url(#eb31)" stroke="#000" stroke-width="1.2"/>
<linearGradient id="eb32" x1="0" x2="1"><stop offset="0" stop-color="rgb(166, 166, 219)"/><stop offset="0.5" stop-color="rgb(119, 119, 200)"/><stop offset="1" stop-color="rgb(53, 53, 90)"/></linearGradient>
<rect x="42.8" y="390.9" width="62.4" height="6.2" fill="url(#eb32)" stroke="#000" stroke-width="1.2"/>
<linearGradient id="eb33" x1="0" x2="1"><stop offset="0" stop-color="rgb(166, 216, 216)"/><stop offset="0.5" stop-color="rgb(119, 195, 195)"/><stop offset="1" stop-color="rgb(53, 87, 87)"/></linearGradient>
<rect x="42.8" y="398.1" width="73.3" height="6.2" fill="url(#eb33)" stroke="#000" stroke-width="1.2"/>
<linearGradient id="eb34" x1="0" x2="1"><stop offset="0" stop-color="rgb(219, 166, 219)"/><stop offset="0.5" stop-color="rgb(200, 119, 200)"/><stop offset="1" stop-color="rgb(90, 53, 90)"/></linearGradient>
<rect x="42.8" y="405.3" width="87.1" height="6.2" fill="url(#eb34)" stroke="#000" stroke-width="1.2"/>
<linearGradient id="eb35" x1="0" x2="1"><stop offset="0" stop-color="rgb(219, 216, 166)"/><stop offset="0.5" stop-color="rgb(200, 195, 119)"/><stop offset="1" stop-color="rgb(90, 87, 53)"/></linearGradient>
<rect x="42.8" y="412.5" width="101.0" height="6.2" fill="url(#eb35)" stroke="#000" stroke-width="1.2"/>
<linearGradient id="eb40" x1="0" x2="1"><stop offset="0" stop-color="rgb(220, 186, 186)"/><stop offset="0.5" stop-color="rgb(202, 149, 149)"/><stop offset="1" stop-color="rgb(90, 67, 67)"/></linearGradient>
<rect x="42.8" y="437.2" width="132.7" height="6.2" fill="url(#eb40)" stroke="#000" stroke-width="1.2"/>
<linearGradient id="eb41" x1="0" x2="1"><stop offset="0" stop-color="rgb(186, 217, 186)"/><stop offset="0.5" stop-color="rgb(149, 197, 149)"/><stop offset="1" stop-color="rgb(67, 88, 67)"/></linearGradient>
<rect x="42.8" y="444.4" width="52.5" height="6.2" fill="url(#eb41)" stroke="#000" stroke-width="1.2"/>
<linearGradient id="eb42" x1="0" x2="1"><stop offset="0" stop-color="rgb(186, 186, 219)"/><stop offset="0.5" stop-color="rgb(149, 149, 200)"/><stop offset="1" stop-color="rgb(67, 67, 90)"/></linearGradient>
<rect x="42.8" y="451.6" width="122.8" height="6.2" fill="url(#eb42)" stroke="#000" stroke-width="1.2"/>
<linearGradient id="eb43" x1="0" x2="1"><stop offset="0" stop-color="rgb(186, 217, 217)"/><stop offset="0.5" stop-color="rgb(149, 197, 197)"/><stop offset="1" stop-color="rgb(67, 88, 88)"/></linearGradient>
<rect x="42.8" y="458.8" width="104.0" height="6.2" fill="url(#eb43)" stroke="#000" stroke-width="1.2"/>
<linearGradient id="eb44" x1="0" x2="1"><stop offset="0" stop-color="rgb(219, 186, 219)"/><stop offset="0.5" stop-color="rgb(200, 149, 200)"/><stop offset="1" stop-color="rgb(90, 67, 90)"/></linearGradient>
<rect x="42.8" y="466.0" width="139.6" height="6.2" fill="url(#eb44)" stroke="#000" stroke-width="1.2"/>
<linearGradient id="eb45" x1="0" x2="1"><stop offset="0" stop-color="rgb(219, 217, 186)"/><stop offset="0.5" stop-color="rgb(200, 197, 149)"/><stop offset="1" stop-color="rgb(90, 88, 67)"/></linearGradient>
<rect x="42.8" y="473.2" width="132.7" height="6.2" fill="url(#eb45)" stroke="#000" stroke-width="1.2"/>
<linearGradient id="ebw" x1="0" x2="1"><stop offset="0" stop-color="#ffffff"/><stop offset="0.5" stop-color="#e8e8e8"/><stop offset="1" stop-color="#909090"/></linearGradient>
<rect x="42" y="541" width="217.8" height="5.5" fill="url(#ebw)" stroke="#000" stroke-width="1.5"/>
<rect x="42" y="188.5" width="298" height="364.0" fill="none" stroke="#9a9a9a" stroke-width="1.5"/>
<rect x="392" y="129.3" width="138" height="278.4" fill="#232323"/>
<line x1="392" y1="175.70000000000002" x2="530" y2="175.70000000000002" stroke="#9a9a9a" stroke-width="1.2"/>
<line x1="392" y1="222.10000000000002" x2="530" y2="222.10000000000002" stroke="#9a9a9a" stroke-width="1.2"/>
<line x1="392" y1="268.5" x2="530" y2="268.5" stroke="#9a9a9a" stroke-width="1.2"/>
<line x1="392" y1="314.9" x2="530" y2="314.9" stroke="#9a9a9a" stroke-width="1.2"/>
<line x1="392" y1="361.3" x2="530" y2="361.3" stroke="#9a9a9a" stroke-width="1.2"/>
<rect x="392" y="129.3" width="138" height="278.4" fill="none" stroke="#9a9a9a" stroke-width="1.5"/>
<line x1="386" y1="129.3" x2="392" y2="129.3" stroke="#bdbdbd" stroke-width="1.5"/>
<text x="386" y="134.10000000000002" font-size="13.2" fill="#d4d4d4" text-anchor="end">15</text>
<line x1="386" y1="175.70000000000002" x2="392" y2="175.70000000000002" stroke="#bdbdbd" stroke-width="1.5"/>
<text x="386" y="180.50000000000003" font-size="13.2" fill="#d4d4d4" text-anchor="end">10</text>
<line x1="386" y1="222.10000000000002" x2="392" y2="222.10000000000002" stroke="#bdbdbd" stroke-width="1.5"/>
<text x="386" y="226.90000000000003" font-size="13.2" fill="#d4d4d4" text-anchor="end">5</text>
<line x1="386" y1="268.5" x2="392" y2="268.5" stroke="#bdbdbd" stroke-width="1.5"/>
<text x="386" y="273.3" font-size="13.2" fill="#d4d4d4" text-anchor="end">0</text>
<line x1="386" y1="314.9" x2="392" y2="314.9" stroke="#bdbdbd" stroke-width="1.5"/>
<text x="386" y="319.7" font-size="13.2" fill="#d4d4d4" text-anchor="end">-5</text>
<line x1="386" y1="361.3" x2="392" y2="361.3" stroke="#bdbdbd" stroke-width="1.5"/>
<text x="386" y="366.1" font-size="13.2" fill="#d4d4d4" text-anchor="end">-10</text>
<line x1="386" y1="407.7" x2="392" y2="407.7" stroke="#bdbdbd" stroke-width="1.5"/>
<text x="386" y="412.5" font-size="13.2" fill="#d4d4d4" text-anchor="end">-15</text>
<line x1="392" y1="407.7" x2="392" y2="412.7" stroke="#bdbdbd" stroke-width="1.5"/>
<line x1="530" y1="407.7" x2="530" y2="412.7" stroke="#bdbdbd" stroke-width="1.5"/>
<text x="448" y="124" font-size="13" fill="#d8d8d8" text-anchor="middle">DeltaL</text>
<text x="461" y="422" font-size="13" fill="#d8d8d8" text-anchor="middle">100%</text>
<rect x="406" y="253.7" width="110" height="14.8" fill="url(#ybar)" stroke="#000" stroke-width="1.2"/>
<rect x="581" y="129.3" width="138" height="278.4" fill="#232323"/>
<line x1="581" y1="175.70000000000002" x2="719" y2="175.70000000000002" stroke="#9a9a9a" stroke-width="1.2"/>
<line x1="581" y1="222.10000000000002" x2="719" y2="222.10000000000002" stroke="#9a9a9a" stroke-width="1.2"/>
<line x1="581" y1="268.5" x2="719" y2="268.5" stroke="#9a9a9a" stroke-width="1.2"/>
<line x1="581" y1="314.9" x2="719" y2="314.9" stroke="#9a9a9a" stroke-width="1.2"/>
<line x1="581" y1="361.3" x2="719" y2="361.3" stroke="#9a9a9a" stroke-width="1.2"/>
<rect x="581" y="129.3" width="138" height="278.4" fill="none" stroke="#9a9a9a" stroke-width="1.5"/>
<line x1="575" y1="129.3" x2="581" y2="129.3" stroke="#bdbdbd" stroke-width="1.5"/>
<text x="575" y="134.10000000000002" font-size="13.2" fill="#d4d4d4" text-anchor="end">15</text>
<line x1="575" y1="175.70000000000002" x2="581" y2="175.70000000000002" stroke="#bdbdbd" stroke-width="1.5"/>
<text x="575" y="180.50000000000003" font-size="13.2" fill="#d4d4d4" text-anchor="end">10</text>
<line x1="575" y1="222.10000000000002" x2="581" y2="222.10000000000002" stroke="#bdbdbd" stroke-width="1.5"/>
<text x="575" y="226.90000000000003" font-size="13.2" fill="#d4d4d4" text-anchor="end">5</text>
<line x1="575" y1="268.5" x2="581" y2="268.5" stroke="#bdbdbd" stroke-width="1.5"/>
<text x="575" y="273.3" font-size="13.2" fill="#d4d4d4" text-anchor="end">0</text>
<line x1="575" y1="314.9" x2="581" y2="314.9" stroke="#bdbdbd" stroke-width="1.5"/>
<text x="575" y="319.7" font-size="13.2" fill="#d4d4d4" text-anchor="end">-5</text>
<line x1="575" y1="361.3" x2="581" y2="361.3" stroke="#bdbdbd" stroke-width="1.5"/>
<text x="575" y="366.1" font-size="13.2" fill="#d4d4d4" text-anchor="end">-10</text>
<line x1="575" y1="407.7" x2="581" y2="407.7" stroke="#bdbdbd" stroke-width="1.5"/>
<text x="575" y="412.5" font-size="13.2" fill="#d4d4d4" text-anchor="end">-15</text>
<line x1="581" y1="407.7" x2="581" y2="412.7" stroke="#bdbdbd" stroke-width="1.5"/>
<line x1="719" y1="407.7" x2="719" y2="412.7" stroke="#bdbdbd" stroke-width="1.5"/>
<text x="637" y="124" font-size="13" fill="#d8d8d8" text-anchor="middle">DeltaC</text>
<text x="650" y="422" font-size="13" fill="#d8d8d8" text-anchor="middle">100%</text>
<rect x="595" y="219.3" width="110" height="49.2" fill="url(#ybar)" stroke="#000" stroke-width="1.2"/>
<rect x="770" y="129.3" width="138" height="278.4" fill="#232323"/>
<line x1="770" y1="175.70000000000002" x2="908" y2="175.70000000000002" stroke="#9a9a9a" stroke-width="1.2"/>
<line x1="770" y1="222.10000000000002" x2="908" y2="222.10000000000002" stroke="#9a9a9a" stroke-width="1.2"/>
<line x1="770" y1="268.5" x2="908" y2="268.5" stroke="#9a9a9a" stroke-width="1.2"/>
<line x1="770" y1="314.9" x2="908" y2="314.9" stroke="#9a9a9a" stroke-width="1.2"/>
<line x1="770" y1="361.3" x2="908" y2="361.3" stroke="#9a9a9a" stroke-width="1.2"/>
<rect x="770" y="129.3" width="138" height="278.4" fill="none" stroke="#9a9a9a" stroke-width="1.5"/>
<line x1="764" y1="129.3" x2="770" y2="129.3" stroke="#bdbdbd" stroke-width="1.5"/>
<text x="764" y="134.10000000000002" font-size="13.2" fill="#d4d4d4" text-anchor="end">15</text>
<line x1="764" y1="175.70000000000002" x2="770" y2="175.70000000000002" stroke="#bdbdbd" stroke-width="1.5"/>
<text x="764" y="180.50000000000003" font-size="13.2" fill="#d4d4d4" text-anchor="end">10</text>
<line x1="764" y1="222.10000000000002" x2="770" y2="222.10000000000002" stroke="#bdbdbd" stroke-width="1.5"/>
<text x="764" y="226.90000000000003" font-size="13.2" fill="#d4d4d4" text-anchor="end">5</text>
<line x1="764" y1="268.5" x2="770" y2="268.5" stroke="#bdbdbd" stroke-width="1.5"/>
<text x="764" y="273.3" font-size="13.2" fill="#d4d4d4" text-anchor="end">0</text>
<line x1="764" y1="314.9" x2="770" y2="314.9" stroke="#bdbdbd" stroke-width="1.5"/>
<text x="764" y="319.7" font-size="13.2" fill="#d4d4d4" text-anchor="end">-5</text>
<line x1="764" y1="361.3" x2="770" y2="361.3" stroke="#bdbdbd" stroke-width="1.5"/>
<text x="764" y="366.1" font-size="13.2" fill="#d4d4d4" text-anchor="end">-10</text>
<line x1="764" y1="407.7" x2="770" y2="407.7" stroke="#bdbdbd" stroke-width="1.5"/>
<text x="764" y="412.5" font-size="13.2" fill="#d4d4d4" text-anchor="end">-15</text>
<line x1="770" y1="407.7" x2="770" y2="412.7" stroke="#bdbdbd" stroke-width="1.5"/>
<line x1="908" y1="407.7" x2="908" y2="412.7" stroke="#bdbdbd" stroke-width="1.5"/>
<text x="826" y="124" font-size="13" fill="#d8d8d8" text-anchor="middle">DeltaH</text>
<text x="839" y="422" font-size="13" fill="#d8d8d8" text-anchor="middle">100%</text>
<rect x="784" y="200.8" width="110" height="67.7" fill="url(#ybar)" stroke="#000" stroke-width="1.2"/>
<rect x="360" y="437" width="567" height="142" fill="#000"/>
<rect x="380.5" y="443.5" width="94" height="57.5" fill="#b9c8aa"/>
<rect x="380.5" y="501" width="94" height="58" fill="#c0c0a7"/>
<rect x="380.5" y="443.5" width="94" height="115.5" fill="none" stroke="#f0f0f0" stroke-width="1"/>
<text x="427.5" y="572.8" font-size="12.5" fill="#ffffff" text-anchor="middle" stroke="#fff" stroke-width="0.35">20%</text>
<rect x="491.3" y="443.5" width="94" height="57.5" fill="#b8ca8b"/>
<rect x="491.3" y="501" width="94" height="58" fill="#c1c089"/>
<rect x="491.3" y="443.5" width="94" height="115.5" fill="none" stroke="#f0f0f0" stroke-width="1"/>
<text x="538.3" y="572.8" font-size="12.5" fill="#ffffff" text-anchor="middle" stroke="#fff" stroke-width="0.35">40%</text>
<rect x="602.1" y="443.5" width="94" height="57.5" fill="#b8c86f"/>
<rect x="602.1" y="501" width="94" height="58" fill="#c0bd6c"/>
<rect x="602.1" y="443.5" width="94" height="115.5" fill="none" stroke="#f0f0f0" stroke-width="1"/>
<text x="649.1" y="572.8" font-size="12.5" fill="#ffffff" text-anchor="middle" stroke="#fff" stroke-width="0.35">60%</text>
<rect x="712.9" y="443.5" width="94" height="57.5" fill="#b8c94b"/>
<rect x="712.9" y="501" width="94" height="58" fill="#c1bd4b"/>
<rect x="712.9" y="443.5" width="94" height="115.5" fill="none" stroke="#f0f0f0" stroke-width="1"/>
<text x="759.9" y="572.8" font-size="12.5" fill="#ffffff" text-anchor="middle" stroke="#fff" stroke-width="0.35">80%</text>
<rect x="823.7" y="443.5" width="94" height="57.5" fill="#b9c800"/>
<rect x="823.7" y="501" width="94" height="58" fill="#c2bb1a"/>
<rect x="823.7" y="443.5" width="94" height="115.5" fill="none" stroke="#f0f0f0" stroke-width="1"/>
<text x="870.7" y="572.8" font-size="12.5" fill="#ffffff" text-anchor="middle" stroke="#fff" stroke-width="0.35">100%</text>
<text transform="translate(372.6 469) rotate(-90)" font-size="12" fill="#fff" stroke="#fff" stroke-width="0.3" text-anchor="middle" textLength="30" lengthAdjust="spacingAndGlyphs">Actual</text>
<text transform="translate(372.6 534) rotate(-90)" font-size="12" fill="#fff" stroke="#fff" stroke-width="0.3" text-anchor="middle" textLength="29" lengthAdjust="spacingAndGlyphs">Target</text>
<text x="1266" y="123" font-size="13" fill="#d8d8d8" text-anchor="middle">CIE 1931 xy</text>
<rect x="968.5" y="127.5" width="621" height="434" fill="none" stroke="#9c9c9c" stroke-width="1.5"/>
<line x1="968.0" y1="562" x2="968.0" y2="567" stroke="#bdbdbd" stroke-width="1.5"/>
<text x="968.0" y="580" font-size="13" fill="#d4d4d4" text-anchor="middle">0</text>
<line x1="962" y1="561.5" x2="968" y2="561.5" stroke="#bdbdbd" stroke-width="1.5"/>
<text x="962" y="566.5" font-size="13" fill="#d4d4d4" text-anchor="end">0</text>
<line x1="1042.0" y1="562" x2="1042.0" y2="567" stroke="#bdbdbd" stroke-width="1.5"/>
<text x="1042.0" y="580" font-size="13" fill="#d4d4d4" text-anchor="middle">0.1</text>
<line x1="962" y1="509.9" x2="968" y2="509.9" stroke="#bdbdbd" stroke-width="1.5"/>
<text x="962" y="514.9" font-size="13" fill="#d4d4d4" text-anchor="end">0.1</text>
<line x1="1116.0" y1="562" x2="1116.0" y2="567" stroke="#bdbdbd" stroke-width="1.5"/>
<text x="1116.0" y="580" font-size="13" fill="#d4d4d4" text-anchor="middle">0.2</text>
<line x1="962" y1="458.3" x2="968" y2="458.3" stroke="#bdbdbd" stroke-width="1.5"/>
<text x="962" y="463.3" font-size="13" fill="#d4d4d4" text-anchor="end">0.2</text>
<line x1="1190.0" y1="562" x2="1190.0" y2="567" stroke="#bdbdbd" stroke-width="1.5"/>
<text x="1190.0" y="580" font-size="13" fill="#d4d4d4" text-anchor="middle">0.3</text>
<line x1="962" y1="406.70000000000005" x2="968" y2="406.70000000000005" stroke="#bdbdbd" stroke-width="1.5"/>
<text x="962" y="411.70000000000005" font-size="13" fill="#d4d4d4" text-anchor="end">0.3</text>
<line x1="1264.0" y1="562" x2="1264.0" y2="567" stroke="#bdbdbd" stroke-width="1.5"/>
<text x="1264.0" y="580" font-size="13" fill="#d4d4d4" text-anchor="middle">0.4</text>
<line x1="962" y1="355.1" x2="968" y2="355.1" stroke="#bdbdbd" stroke-width="1.5"/>
<text x="962" y="360.1" font-size="13" fill="#d4d4d4" text-anchor="end">0.4</text>
<line x1="1338.0" y1="562" x2="1338.0" y2="567" stroke="#bdbdbd" stroke-width="1.5"/>
<text x="1338.0" y="580" font-size="13" fill="#d4d4d4" text-anchor="middle">0.5</text>
<line x1="962" y1="303.5" x2="968" y2="303.5" stroke="#bdbdbd" stroke-width="1.5"/>
<text x="962" y="308.5" font-size="13" fill="#d4d4d4" text-anchor="end">0.5</text>
<line x1="1412.0" y1="562" x2="1412.0" y2="567" stroke="#bdbdbd" stroke-width="1.5"/>
<text x="1412.0" y="580" font-size="13" fill="#d4d4d4" text-anchor="middle">0.6</text>
<line x1="962" y1="251.90000000000003" x2="968" y2="251.90000000000003" stroke="#bdbdbd" stroke-width="1.5"/>
<text x="962" y="256.90000000000003" font-size="13" fill="#d4d4d4" text-anchor="end">0.6</text>
<line x1="1486.0" y1="562" x2="1486.0" y2="567" stroke="#bdbdbd" stroke-width="1.5"/>
<text x="1486.0" y="580" font-size="13" fill="#d4d4d4" text-anchor="middle">0.7</text>
<line x1="962" y1="200.3" x2="968" y2="200.3" stroke="#bdbdbd" stroke-width="1.5"/>
<text x="962" y="205.3" font-size="13" fill="#d4d4d4" text-anchor="end">0.7</text>
<line x1="1560.0" y1="562" x2="1560.0" y2="567" stroke="#bdbdbd" stroke-width="1.5"/>
<text x="1560.0" y="580" font-size="13" fill="#d4d4d4" text-anchor="middle">0.8</text>
<line x1="962" y1="148.7" x2="968" y2="148.7" stroke="#bdbdbd" stroke-width="1.5"/>
<text x="962" y="153.7" font-size="13" fill="#d4d4d4" text-anchor="end">0.8</text>
<rect x="1239.9" y="383.4" width="13" height="13" fill="none" stroke="#ffffff" stroke-width="1.6"/>
<rect x="1289.4" y="383.4" width="13" height="13" fill="none" stroke="#ffffff" stroke-width="1.6"/>
<rect x="1333.5" y="383.4" width="13" height="13" fill="none" stroke="#ffffff" stroke-width="1.6"/>
<rect x="1380.6" y="383.4" width="13" height="13" fill="none" stroke="#ffffff" stroke-width="1.6"/>
<rect x="1434.5" y="383.4" width="13" height="13" fill="none" stroke="#ffffff" stroke-width="1.6"/>
<rect x="1182.5" y="244.4" width="13" height="13" fill="none" stroke="#ffffff" stroke-width="1.6"/>
<rect x="1184.8" y="274.6" width="13" height="13" fill="none" stroke="#ffffff" stroke-width="1.6"/>
<rect x="1186.6" y="302.0" width="13" height="13" fill="none" stroke="#ffffff" stroke-width="1.6"/>
<rect x="1189.0" y="327.9" width="13" height="13" fill="none" stroke="#ffffff" stroke-width="1.6"/>
<rect x="1190.5" y="355.7" width="13" height="13" fill="none" stroke="#ffffff" stroke-width="1.6"/>
<rect x="1071.5" y="522.2" width="13" height="13" fill="none" stroke="#ffffff" stroke-width="1.6"/>
<rect x="1097.5" y="492.5" width="13" height="13" fill="none" stroke="#ffffff" stroke-width="1.6"/>
<rect x="1121.3" y="465.9" width="13" height="13" fill="none" stroke="#ffffff" stroke-width="1.6"/>
<rect x="1144.4" y="439.7" width="13" height="13" fill="none" stroke="#ffffff" stroke-width="1.6"/>
<rect x="1168.0" y="411.8" width="13" height="13" fill="none" stroke="#ffffff" stroke-width="1.6"/>
<rect x="1127.2" y="385.0" width="13" height="13" fill="none" stroke="#ffffff" stroke-width="1.6"/>
<rect x="1140.3" y="385.0" width="13" height="13" fill="none" stroke="#ffffff" stroke-width="1.6"/>
<rect x="1153.4" y="385.0" width="13" height="13" fill="none" stroke="#ffffff" stroke-width="1.6"/>
<rect x="1166.3" y="385.0" width="13" height="13" fill="none" stroke="#ffffff" stroke-width="1.6"/>
<rect x="1179.4" y="385.0" width="13" height="13" fill="none" stroke="#ffffff" stroke-width="1.6"/>
<rect x="1198.1" y="474.5" width="13" height="13" fill="none" stroke="#ffffff" stroke-width="1.6"/>
<rect x="1196.7" y="454.8" width="13" height="13" fill="none" stroke="#ffffff" stroke-width="1.6"/>
<rect x="1195.4" y="436.8" width="13" height="13" fill="none" stroke="#ffffff" stroke-width="1.6"/>
<rect x="1195.4" y="421.7" width="13" height="13" fill="none" stroke="#ffffff" stroke-width="1.6"/>
<rect x="1194.2" y="402.6" width="13" height="13" fill="none" stroke="#ffffff" stroke-width="1.6"/>
<rect x="1271.4" y="293.5" width="13" height="13" fill="none" stroke="#ffffff" stroke-width="1.6"/>
<rect x="1254.2" y="312.8" width="13" height="13" fill="none" stroke="#ffffff" stroke-width="1.6"/>
<rect x="1239.9" y="329.4" width="13" height="13" fill="none" stroke="#ffffff" stroke-width="1.6"/>
<rect x="1224.3" y="346.0" width="13" height="13" fill="none" stroke="#ffffff" stroke-width="1.6"/>
<rect x="1208.5" y="365.4" width="13" height="13" fill="none" stroke="#ffffff" stroke-width="1.6"/>
<rect x="1193.0" y="384.8" width="13" height="13" fill="none" stroke="#000000" stroke-width="1.6"/>
<ellipse cx="1230.5" cy="386.5" rx="4.4" ry="3.9" fill="#b08080" stroke="#111" stroke-width="1.1"/>
<ellipse cx="1276.5" cy="386.5" rx="4.4" ry="3.9" fill="#b86a6a" stroke="#111" stroke-width="1.1"/>
<ellipse cx="1323.5" cy="386.5" rx="4.4" ry="3.9" fill="#c05050" stroke="#111" stroke-width="1.1"/>
<ellipse cx="1378.2" cy="385.2" rx="4.4" ry="3.9" fill="#c03838" stroke="#111" stroke-width="1.1"/>
<ellipse cx="1432.2" cy="385.2" rx="4.4" ry="3.9" fill="#c01818" stroke="#111" stroke-width="1.1"/>
<ellipse cx="1199.1" cy="250.9" rx="4.4" ry="3.9" fill="#2a9a2a" stroke="#111" stroke-width="1.1"/>
<ellipse cx="1199.3" cy="278.5" rx="4.4" ry="3.9" fill="#4cae4c" stroke="#111" stroke-width="1.1"/>
<ellipse cx="1198.4" cy="304.8" rx="4.4" ry="3.9" fill="#64b464" stroke="#111" stroke-width="1.1"/>
<ellipse cx="1196.2" cy="332.4" rx="4.4" ry="3.9" fill="#80b080" stroke="#111" stroke-width="1.1"/>
<ellipse cx="1195.4" cy="359.0" rx="4.4" ry="3.9" fill="#98b098" stroke="#111" stroke-width="1.1"/>
<ellipse cx="1078.6" cy="532.2" rx="4.4" ry="3.9" fill="#1818b0" stroke="#111" stroke-width="1.1"/>
<ellipse cx="1102.4" cy="501.3" rx="4.4" ry="3.9" fill="#4040b0" stroke="#111" stroke-width="1.1"/>
<ellipse cx="1127.4" cy="471.2" rx="4.4" ry="3.9" fill="#6060b8" stroke="#111" stroke-width="1.1"/>
<ellipse cx="1149.3" cy="441.1" rx="4.4" ry="3.9" fill="#7878b0" stroke="#111" stroke-width="1.1"/>
<ellipse cx="1171.8" cy="412.6" rx="4.4" ry="3.9" fill="#9090b0" stroke="#111" stroke-width="1.1"/>
<ellipse cx="1140.1" cy="386.4" rx="4.4" ry="3.9" fill="#20b0b0" stroke="#111" stroke-width="1.1"/>
<ellipse cx="1152.2" cy="386.4" rx="4.4" ry="3.9" fill="#5aaeae" stroke="#111" stroke-width="1.1"/>
<ellipse cx="1162.4" cy="386.4" rx="4.4" ry="3.9" fill="#78b0b0" stroke="#111" stroke-width="1.1"/>
<ellipse cx="1173.3" cy="386.4" rx="4.4" ry="3.9" fill="#90b0b0" stroke="#111" stroke-width="1.1"/>
<ellipse cx="1183.3" cy="386.4" rx="4.4" ry="3.9" fill="#a4b0b0" stroke="#111" stroke-width="1.1"/>
<ellipse cx="1187.4" cy="486.9" rx="4.4" ry="3.9" fill="#c020c0" stroke="#111" stroke-width="1.1"/>
<ellipse cx="1189.0" cy="463.8" rx="4.4" ry="3.9" fill="#b850b8" stroke="#111" stroke-width="1.1"/>
<ellipse cx="1190.3" cy="442.3" rx="4.4" ry="3.9" fill="#b870b8" stroke="#111" stroke-width="1.1"/>
<ellipse cx="1191.3" cy="423.2" rx="4.4" ry="3.9" fill="#b088b0" stroke="#111" stroke-width="1.1"/>
<ellipse cx="1191.3" cy="404.4" rx="4.4" ry="3.9" fill="#b0a0b0" stroke="#111" stroke-width="1.1"/>
<ellipse cx="1268.3" cy="290.2" rx="4.4" ry="3.9" fill="#c0c010" stroke="#111" stroke-width="1.1"/>
<ellipse cx="1251.3" cy="310.7" rx="4.4" ry="3.9" fill="#b8b450" stroke="#111" stroke-width="1.1"/>
<ellipse cx="1237.3" cy="330.0" rx="4.4" ry="3.9" fill="#b8b470" stroke="#111" stroke-width="1.1"/>
<ellipse cx="1221.2" cy="348.8" rx="4.4" ry="3.9" fill="#b0ac88" stroke="#111" stroke-width="1.1"/>
<ellipse cx="1207.4" cy="368.4" rx="4.4" ry="3.9" fill="#b0aea0" stroke="#111" stroke-width="1.1"/>
<ellipse cx="1191.5" cy="386.4" rx="4.4" ry="3.9" fill="#ffffff" stroke="#111" stroke-width="1.1"/>
<rect x="1371" y="131" width="214" height="167" fill="none" stroke="#2a2a2a" stroke-width="2"/>
<rect x="1373.5" y="133.5" width="209" height="162" fill="none" stroke="#a8a8a8" stroke-width="1.5"/>
<rect x="1470.5" y="207.5" width="13" height="13" fill="none" stroke="#ffffff" stroke-width="1.6"/>
<ellipse cx="1423.0" cy="153.0" rx="4.4" ry="3.9" fill="#c8c010" stroke="#111" stroke-width="1.1"/>
<text x="15" y="644" font-size="25" fill="#ececec" textLength="209" lengthAdjust="spacingAndGlyphs" stroke="#ececec" stroke-width="0.45">Current Reading</text>
<text x="15" y="682" font-size="22" fill="#ececec" textLength="98" lengthAdjust="spacingAndGlyphs" stroke="#ececec" stroke-width="0.45">x: 0.4064</text>
<text x="15" y="717" font-size="22" fill="#ececec" textLength="85" lengthAdjust="spacingAndGlyphs" stroke="#ececec" stroke-width="0.45">y: 0.524</text>
<text x="15" y="753" font-size="22" fill="#ececec" textLength="58" lengthAdjust="spacingAndGlyphs" stroke="#ececec" stroke-width="0.45">fL: 44</text>
<text x="15" y="789" font-size="22" fill="#ececec" textLength="152" lengthAdjust="spacingAndGlyphs" stroke="#ececec" stroke-width="0.45">cd/m²: 150.74</text>
<rect x="339.5" y="625.5" width="242.5" height="159.5" fill="#232323"/>
<line x1="339.5" y1="653.7" x2="582" y2="653.7" stroke="#9a9a9a" stroke-width="1.2"/>
<line x1="339.5" y1="706.2" x2="582" y2="706.2" stroke="#9a9a9a" stroke-width="1.2"/>
<line x1="339.5" y1="759.5" x2="582" y2="759.5" stroke="#9a9a9a" stroke-width="1.2"/>
<rect x="339.5" y="625.5" width="242.5" height="159.5" fill="none" stroke="#9a9a9a" stroke-width="1.5"/>
<line x1="333.5" y1="653.7" x2="339.5" y2="653.7" stroke="#bdbdbd" stroke-width="1.5"/>
<text x="333.5" y="658.2" font-size="12.5" fill="#d4d4d4" text-anchor="end">20</text>
<line x1="333.5" y1="706.2" x2="339.5" y2="706.2" stroke="#bdbdbd" stroke-width="1.5"/>
<text x="333.5" y="710.7" font-size="12.5" fill="#d4d4d4" text-anchor="end">0</text>
<line x1="333.5" y1="759.5" x2="339.5" y2="759.5" stroke="#bdbdbd" stroke-width="1.5"/>
<text x="333.5" y="764.0" font-size="12.5" fill="#d4d4d4" text-anchor="end">-20</text>
<line x1="339.5" y1="785" x2="339.5" y2="790" stroke="#bdbdbd" stroke-width="1.5"/>
<line x1="582" y1="785" x2="582" y2="790" stroke="#bdbdbd" stroke-width="1.5"/>
<text x="448" y="622" font-size="13" fill="#d8d8d8" text-anchor="middle">RGB Balance</text>
<text x="460.5" y="799" font-size="13" fill="#d8d8d8" text-anchor="middle">100%</text>
<rect x="364" y="706.2" width="64" height="27" fill="url(#rbar)" stroke="#000" stroke-width="1.2"/>
<rect x="429.5" y="680" width="63.5" height="26.2" fill="url(#gbar)" stroke="#000" stroke-width="1.2"/>
<rect x="494.5" y="706.2" width="64" height="74.3" fill="url(#bbar)" stroke="#000" stroke-width="1.2"/>
<rect x="603" y="606" width="19" height="26.7" fill="#000"/>
<rect x="622" y="606" width="672" height="13.3" fill="#303030"/>
<rect x="622" y="619.3" width="672" height="13.4" fill="#141414"/>
<text x="781.4" y="625.3" font-size="14.5" fill="#f4f4f4" textLength="38" lengthAdjust="spacingAndGlyphs" stroke="#f4f4f4" stroke-width="0.6">20%</text>
<text x="884.9" y="625.3" font-size="14.5" fill="#f4f4f4" textLength="38" lengthAdjust="spacingAndGlyphs" stroke="#f4f4f4" stroke-width="0.6">40%</text>
<text x="988.6" y="625.3" font-size="14.5" fill="#f4f4f4" textLength="38" lengthAdjust="spacingAndGlyphs" stroke="#f4f4f4" stroke-width="0.6">60%</text>
<text x="1092" y="625.3" font-size="14.5" fill="#f4f4f4" textLength="38" lengthAdjust="spacingAndGlyphs" stroke="#f4f4f4" stroke-width="0.6">80%</text>
<text x="1196.8" y="625.3" font-size="14.5" fill="#f4f4f4" textLength="49" lengthAdjust="spacingAndGlyphs" stroke="#f4f4f4" stroke-width="0.6">100%</text>
<rect x="603" y="632.75" width="19" height="25" fill="#242424"/>
<rect x="622" y="632.75" width="672" height="25" fill="#404040"/>
<text x="627.8" y="651.05" font-size="15" fill="#f2f2f2" textLength="75.4" lengthAdjust="spacingAndGlyphs" stroke="#f2f2f2" stroke-width="0.3">x: CIE31</text>
<text x="781.4" y="651.05" font-size="15" fill="#f2f2f2" textLength="65" lengthAdjust="spacingAndGlyphs" stroke="#f2f2f2" stroke-width="0.3">0.3237</text>
<text x="884.9" y="651.05" font-size="15" fill="#f2f2f2" textLength="65" lengthAdjust="spacingAndGlyphs" stroke="#f2f2f2" stroke-width="0.3">0.3438</text>
<text x="988.6" y="651.05" font-size="15" fill="#f2f2f2" textLength="65" lengthAdjust="spacingAndGlyphs" stroke="#f2f2f2" stroke-width="0.3">0.3644</text>
<text x="1092" y="651.05" font-size="15" fill="#f2f2f2" textLength="65" lengthAdjust="spacingAndGlyphs" stroke="#f2f2f2" stroke-width="0.3">0.3841</text>
<text x="1196.8" y="651.05" font-size="15" fill="#f2f2f2" textLength="65" lengthAdjust="spacingAndGlyphs" stroke="#f2f2f2" stroke-width="0.3">0.4064</text>
<rect x="603" y="657.75" width="19" height="25" fill="#242424"/>
<rect x="622" y="657.75" width="672" height="25" fill="#7e7e7e"/>
<text x="627.8" y="676.05" font-size="15" fill="#f2f2f2" textLength="76" lengthAdjust="spacingAndGlyphs" stroke="#f2f2f2" stroke-width="0.3">y: CIE31</text>
<text x="781.4" y="676.05" font-size="15" fill="#f2f2f2" textLength="65" lengthAdjust="spacingAndGlyphs" stroke="#f2f2f2" stroke-width="0.3">0.3729</text>
<text x="884.9" y="676.05" font-size="15" fill="#f2f2f2" textLength="65" lengthAdjust="spacingAndGlyphs" stroke="#f2f2f2" stroke-width="0.3">0.4096</text>
<text x="988.6" y="676.05" font-size="15" fill="#f2f2f2" textLength="65" lengthAdjust="spacingAndGlyphs" stroke="#f2f2f2" stroke-width="0.3">0.4472</text>
<text x="1092" y="676.05" font-size="15" fill="#f2f2f2" textLength="65" lengthAdjust="spacingAndGlyphs" stroke="#f2f2f2" stroke-width="0.3">0.4832</text>
<text x="1196.8" y="676.05" font-size="15" fill="#f2f2f2" textLength="65" lengthAdjust="spacingAndGlyphs" stroke="#f2f2f2" stroke-width="0.3">0.5240</text>
<rect x="603" y="682.75" width="19" height="25" fill="#242424"/>
<rect x="622" y="682.75" width="672" height="25" fill="#404040"/>
<text x="627.8" y="701.05" font-size="15" fill="#f2f2f2" textLength="12.5" lengthAdjust="spacingAndGlyphs" stroke="#f2f2f2" stroke-width="0.3">Y</text>
<text x="781.4" y="701.05" font-size="15" fill="#f2f2f2" textLength="89" lengthAdjust="spacingAndGlyphs" stroke="#f2f2f2" stroke-width="0.3">158.8038</text>
<text x="884.9" y="701.05" font-size="15" fill="#f2f2f2" textLength="89" lengthAdjust="spacingAndGlyphs" stroke="#f2f2f2" stroke-width="0.3">156.4041</text>
<text x="988.6" y="701.05" font-size="15" fill="#f2f2f2" textLength="89" lengthAdjust="spacingAndGlyphs" stroke="#f2f2f2" stroke-width="0.3">154.4636</text>
<text x="1092" y="701.05" font-size="15" fill="#f2f2f2" textLength="89" lengthAdjust="spacingAndGlyphs" stroke="#f2f2f2" stroke-width="0.3">152.8902</text>
<text x="1196.8" y="701.05" font-size="15" fill="#f2f2f2" textLength="89" lengthAdjust="spacingAndGlyphs" stroke="#f2f2f2" stroke-width="0.3">150.7386</text>
<rect x="603" y="707.75" width="19" height="25" fill="#242424"/>
<rect x="622" y="707.75" width="672" height="25" fill="#7e7e7e"/>
<text x="627.8" y="726.05" font-size="15" fill="#f2f2f2" textLength="136.5" lengthAdjust="spacingAndGlyphs" stroke="#f2f2f2" stroke-width="0.3">Target x:CIE31</text>
<text x="781.4" y="726.05" font-size="15" fill="#f2f2f2" textLength="65" lengthAdjust="spacingAndGlyphs" stroke="#f2f2f2" stroke-width="0.3">0.3344</text>
<text x="884.9" y="726.05" font-size="15" fill="#f2f2f2" textLength="65" lengthAdjust="spacingAndGlyphs" stroke="#f2f2f2" stroke-width="0.3">0.3564</text>
<text x="988.6" y="726.05" font-size="15" fill="#f2f2f2" textLength="65" lengthAdjust="spacingAndGlyphs" stroke="#f2f2f2" stroke-width="0.3">0.3773</text>
<text x="1092" y="726.05" font-size="15" fill="#f2f2f2" textLength="65" lengthAdjust="spacingAndGlyphs" stroke="#f2f2f2" stroke-width="0.3">0.3969</text>
<text x="1196.8" y="726.05" font-size="15" fill="#f2f2f2" textLength="65" lengthAdjust="spacingAndGlyphs" stroke="#f2f2f2" stroke-width="0.3">0.4193</text>
<rect x="603" y="732.75" width="19" height="25" fill="#242424"/>
<rect x="622" y="732.75" width="672" height="25" fill="#404040"/>
<text x="627.8" y="751.05" font-size="15" fill="#f2f2f2" textLength="137.7" lengthAdjust="spacingAndGlyphs" stroke="#f2f2f2" stroke-width="0.3">Target y:CIE31</text>
<text x="781.4" y="751.05" font-size="15" fill="#f2f2f2" textLength="65" lengthAdjust="spacingAndGlyphs" stroke="#f2f2f2" stroke-width="0.3">0.3648</text>
<text x="884.9" y="751.05" font-size="15" fill="#f2f2f2" textLength="65" lengthAdjust="spacingAndGlyphs" stroke="#f2f2f2" stroke-width="0.3">0.4013</text>
<text x="988.6" y="751.05" font-size="15" fill="#f2f2f2" textLength="65" lengthAdjust="spacingAndGlyphs" stroke="#f2f2f2" stroke-width="0.3">0.4358</text>
<text x="1092" y="751.05" font-size="15" fill="#f2f2f2" textLength="65" lengthAdjust="spacingAndGlyphs" stroke="#f2f2f2" stroke-width="0.3">0.4682</text>
<text x="1196.8" y="751.05" font-size="15" fill="#f2f2f2" textLength="65" lengthAdjust="spacingAndGlyphs" stroke="#f2f2f2" stroke-width="0.3">0.5053</text>
<rect x="603" y="757.75" width="19" height="25" fill="#242424"/>
<rect x="622" y="757.75" width="672" height="25" fill="#7e7e7e"/>
<text x="627.8" y="776.05" font-size="15" fill="#f2f2f2" textLength="80" lengthAdjust="spacingAndGlyphs" stroke="#f2f2f2" stroke-width="0.3">Target Y</text>
<text x="781.4" y="776.05" font-size="15" fill="#f2f2f2" textLength="89" lengthAdjust="spacingAndGlyphs" stroke="#f2f2f2" stroke-width="0.3">150.4658</text>
<text x="884.9" y="776.05" font-size="15" fill="#f2f2f2" textLength="89" lengthAdjust="spacingAndGlyphs" stroke="#f2f2f2" stroke-width="0.3">147.8247</text>
<text x="988.6" y="776.05" font-size="15" fill="#f2f2f2" textLength="89" lengthAdjust="spacingAndGlyphs" stroke="#f2f2f2" stroke-width="0.3">145.7953</text>
<text x="1092" y="776.05" font-size="15" fill="#f2f2f2" textLength="89" lengthAdjust="spacingAndGlyphs" stroke="#f2f2f2" stroke-width="0.3">144.2027</text>
<text x="1196.8" y="776.05" font-size="15" fill="#f2f2f2" textLength="89" lengthAdjust="spacingAndGlyphs" stroke="#f2f2f2" stroke-width="0.3">142.6630</text>
<linearGradient id="bbarbg" x1="0" x2="0" y1="0" y2="1"><stop offset="0" stop-color="#484848"/><stop offset="1" stop-color="#242424"/></linearGradient>
<linearGradient id="selbtn" x1="0" x2="0" y1="0" y2="1"><stop offset="0" stop-color="#1a1a1a"/><stop offset="0.45" stop-color="#2e2e2e"/><stop offset="1" stop-color="#333"/></linearGradient>
<linearGradient id="gap" x1="0" x2="0" y1="0" y2="1"><stop offset="0" stop-color="#363636"/><stop offset="1" stop-color="#202020"/></linearGradient>
<linearGradient id="mbtn" x1="0" x2="0" y1="0" y2="1"><stop offset="0" stop-color="#b2b2b2"/><stop offset="1" stop-color="#6c6c6c"/></linearGradient>
<linearGradient id="mknob" x1="0" x2="0" y1="0" y2="1"><stop offset="0" stop-color="#707070"/><stop offset="1" stop-color="#a8a8a8"/></linearGradient>
<linearGradient id="dknob" x1="0" x2="0" y1="0" y2="1"><stop offset="0" stop-color="#262626"/><stop offset="1" stop-color="#3a3a3a"/></linearGradient>
<linearGradient id="disbtn" x1="0" x2="0" y1="0" y2="1"><stop offset="0" stop-color="#3c3c3c"/><stop offset="1" stop-color="#242424"/></linearGradient>
<rect x="0" y="808" width="1276" height="62" fill="url(#bbarbg)"/>
<rect x="46" y="808" width="6" height="62" fill="url(#gap)"/>
<rect x="0" y="869" width="1600" height="1" fill="#262626"/>
<rect x="1" y="808" width="45" height="61" rx="4" fill="url(#pbtn)"/>
<circle cx="23.3" cy="817.3" r="7.3" fill="url(#mknob)"/>
<path d="M19.3 818.6H27.4L23.3 814Z" fill="#2a2a2a"/>
<rect x="6" y="834.2" width="35" height="29.8" rx="3" fill="#ffff00"/>
<path d="M6 861V837Q6 834.2 9 834.2H38" fill="none" stroke="#c8c800" stroke-width="1"/>
<rect x="52.3" y="808" width="149.5" height="61" rx="5" fill="url(#pbtn)"/>
<rect x="57.3" y="813.3" width="139.5" height="35.7" rx="3" fill="#c0c0a5"/>
<text x="127.3" y="864" font-size="11.5" fill="#2a2a2a" text-anchor="middle" textLength="20" lengthAdjust="spacingAndGlyphs" stroke="#2a2a2a" stroke-width="0.35">20%</text>
<rect x="204.3" y="808" width="149.5" height="61" rx="5" fill="url(#pbtn)"/>
<rect x="209.3" y="813.3" width="139.5" height="35.7" rx="3" fill="#c0c088"/>
<text x="279.3" y="864" font-size="11.5" fill="#2a2a2a" text-anchor="middle" textLength="20" lengthAdjust="spacingAndGlyphs" stroke="#2a2a2a" stroke-width="0.35">40%</text>
<rect x="356.5" y="808" width="149.5" height="61" rx="5" fill="url(#pbtn)"/>
<rect x="361.5" y="813.3" width="139.5" height="35.7" rx="3" fill="#c0bd6c"/>
<text x="431.5" y="864" font-size="11.5" fill="#2a2a2a" text-anchor="middle" textLength="20" lengthAdjust="spacingAndGlyphs" stroke="#2a2a2a" stroke-width="0.35">60%</text>
<rect x="508.7" y="808" width="149.5" height="61" rx="5" fill="url(#pbtn)"/>
<rect x="513.7" y="813.3" width="139.5" height="35.7" rx="3" fill="#c1bf4e"/>
<text x="583.7" y="864" font-size="11.5" fill="#2a2a2a" text-anchor="middle" textLength="20" lengthAdjust="spacingAndGlyphs" stroke="#2a2a2a" stroke-width="0.35">80%</text>
<rect x="660" y="808" width="149.6" height="61" rx="5" fill="url(#selbtn)"/>
<rect x="665" y="813" width="140" height="36" rx="3" fill="#c0c000"/>
<text x="735" y="864" font-size="11.5" fill="#ffffff" text-anchor="middle" font-weight="bold" textLength="26.3" lengthAdjust="spacingAndGlyphs">100%</text>
<rect x="1276.8" y="808" width="48.2" height="61" rx="4" fill="url(#mbtn)"/>
<rect x="1276.8" y="826" width="48.2" height="1.2" fill="#3a3a3a"/>
<circle cx="1301.5" cy="817.3" r="7.3" fill="url(#mknob)"/>
<path d="M1297.6 818.6H1305.4L1301.5 814.2Z" fill="#2a2a2a"/>
<rect x="1286.3" y="833.2" width="29" height="29" rx="4" fill="#a4a4a4" stroke="#262626" stroke-width="2.4"/>
<rect x="1294" y="841" width="13.6" height="13.5" fill="#111"/>
<rect x="1326" y="808" width="45.0" height="30" fill="url(#mbtn)"/>
<circle cx="1348.5" cy="823" r="10" fill="url(#mknob)"/>
<rect x="1372.2" y="808" width="44.1" height="30" fill="url(#mbtn)"/>
<circle cx="1394.2" cy="823" r="10" fill="url(#mknob)"/>
<rect x="1417.5" y="808" width="43.7" height="30" fill="url(#mbtn)"/>
<circle cx="1439.4" cy="823" r="10" fill="url(#mknob)"/>
<rect x="1462.4" y="808" width="44.0" height="30" fill="url(#mbtn)"/>
<circle cx="1484.4" cy="823" r="10" fill="url(#mknob)"/>
<rect x="1507.6" y="808" width="43.5" height="30" fill="url(#mbtn)"/>
<circle cx="1529.3" cy="823" r="10" fill="url(#mknob)"/>
<path d="M1326 838V811Q1326 808 1329 808H1371V838Z" fill="url(#mbtn)"/>
<circle cx="1348.8" cy="823" r="10" fill="url(#mknob)"/>
<rect x="1345" y="819" width="8" height="8" fill="#2a2a2a"/>
<path d="M1392 819.2V828.8L1400.2 824Z" fill="#2a2a2a"/>
<path d="M1436.5 818.5H1434.5V829H1436.5M1444 818.5H1446V829H1444" fill="none" stroke="#2a2a2a" stroke-width="1.8"/>
<rect x="1437.8" y="823" width="1.8" height="1.8" fill="#2a2a2a"/>
<rect x="1440.9" y="823" width="1.8" height="1.8" fill="#2a2a2a"/>
<path d="M1485 823C1482.5 820.2 1478.8 820.5 1478.8 823S1482.5 825.8 1485 823S1491.2 820.2 1491.2 823S1487.5 825.8 1485 823Z" fill="none" stroke="#2a2a2a" stroke-width="1.5"/>
<g fill="none" stroke="#2a2a2a" stroke-width="1.8"><path d="M1525 821.5A5.5 5.5 0 0 1 1534.5 819.5"/><path d="M1535 824.5A5.5 5.5 0 0 1 1525.5 826.5"/></g>
<path d="M1535.5 816.5V821.5H1531Z M1524.5 829.5V824.5H1529Z" fill="#2a2a2a"/>
<path d="M1552.3 838V808H1595Q1598.7 808 1598.7 811.5V838Z" fill="url(#disbtn)"/>
<circle cx="1575.9" cy="823" r="10" fill="url(#dknob)"/>
<rect x="1326" y="839.1" width="135.6" height="31" rx="3" fill="url(#mbtn)"/>
<rect x="1462.4" y="839.1" width="136.3" height="31" rx="3" fill="url(#mbtn)"/>
<text x="1383.8" y="862" font-size="21.5" fill="#2a2a2a" textLength="50.4" lengthAdjust="spacingAndGlyphs" stroke="#2a2a2a" stroke-width="0.5">Back</text>
<text x="1490.6" y="862" font-size="21.5" fill="#2a2a2a" textLength="51.4" lengthAdjust="spacingAndGlyphs" stroke="#2a2a2a" stroke-width="0.5">Next</text>
<circle cx="1357" cy="854" r="10" fill="url(#mknob)"/>
<circle cx="1569.8" cy="854" r="10" fill="url(#mknob)"/>
<path d="M1357 849.5L1352.8 854L1357 858.5M1361 849.5L1356.8 854L1361 858.5" fill="none" stroke="#2a2a2a" stroke-width="1.5"/>
<path d="M1566 849.5L1570.2 854L1566 858.5M1570 849.5L1574.2 854L1570 858.5" fill="none" stroke="#2a2a2a" stroke-width="1.5"/>
</svg>
<script>
(function(){
var cv=document.getElementById('cv');
var ctx=cv.getContext('2d');
var LOC=[[0.1741,0.0050],[0.1740,0.0050],[0.1738,0.0049],[0.1736,0.0049],[0.1733,0.0048],[0.1730,0.0048],[0.1726,0.0048],[0.1721,0.0048],[0.1714,0.0051],[0.1703,0.0058],[0.1689,0.0069],[0.1669,0.0086],[0.1644,0.0109],[0.1611,0.0138],[0.1566,0.0177],[0.1510,0.0227],[0.1440,0.0297],[0.1355,0.0399],[0.1241,0.0578],[0.1096,0.0868],[0.0913,0.1327],[0.0687,0.2007],[0.0454,0.2950],[0.0235,0.4127],[0.0082,0.5384],[0.0039,0.6548],[0.0139,0.7502],[0.0389,0.8120],[0.0743,0.8338],[0.1142,0.8262],[0.1547,0.8059],[0.1929,0.7816],[0.2296,0.7543],[0.2658,0.7243],[0.3016,0.6923],[0.3373,0.6589],[0.3731,0.6245],[0.4087,0.5896],[0.4441,0.5547],[0.4788,0.5202],[0.5125,0.4866],[0.5448,0.4544],[0.5752,0.4242],[0.6029,0.3965],[0.6270,0.3725],[0.6482,0.3514],[0.6658,0.3340],[0.6801,0.3197],[0.6915,0.3083],[0.7006,0.2993],[0.7079,0.2920],[0.7140,0.2859],[0.7190,0.2809],[0.7230,0.2770],[0.7260,0.2740],[0.7283,0.2717],[0.7300,0.2700],[0.7347,0.2653]];
var OUTK=0.6, GAM=1.0;
(function(){var P=LOC,Q=[];for(var i=0;i<P.length-1;i++){var p0=P[Math.max(0,i-1)],p1=P[i],p2=P[i+1],p3=P[Math.min(P.length-1,i+2)];
for(var t=0;t<1;t+=0.125){var t2=t*t,t3=t2*t;
var x=0.5*((2*p1[0])+(-p0[0]+p2[0])*t+(2*p0[0]-5*p1[0]+4*p2[0]-p3[0])*t2+(-p0[0]+3*p1[0]-3*p2[0]+p3[0])*t3);
var y=0.5*((2*p1[1])+(-p0[1]+p2[1])*t+(2*p0[1]-5*p1[1]+4*p2[1]-p3[1])*t2+(-p0[1]+3*p1[1]-3*p2[1]+p3[1])*t3);Q.push([x,y]);}}
Q.push(P[P.length-1]);LOC=Q;})();
function col(x,y,o,i){
  if(y<=0.0001) y=0.0001;
  var X=x/y, Z=(1-x-y)/y;
  var r= 3.2406*X-1.5372-0.4986*Z;
  var g=-0.9689*X+1.8758+0.0415*Z;
  var b= 0.0557*X-0.2040+1.0570*Z;
  var ins=(r>=0&&g>=0&&b>=0);
  if(r<0)r=0; if(g<0)g=0; if(b<0)b=0;
  var m=Math.max(r,g,b); if(m<=0)m=1;
  r/=m; g/=m; b/=m;
  if(GAM!=1){r=Math.pow(r,GAM);g=Math.pow(g,GAM);b=Math.pow(b,GAM);}
  var k=ins?255:255*OUTK;
  o[i]=r*k; o[i+1]=g*k; o[i+2]=b*k; o[i+3]=255;
}
function render(px,py,pw,ph,x0,x1,y0,y1,clip){
  var SS=3, W=pw*SS, H=ph*SS;
  var off=document.createElement('canvas'); off.width=W; off.height=H;
  var oc=off.getContext('2d'); var im=oc.createImageData(W,H); var d=im.data;
  for(var j=0;j<H;j++){ var y=y1-(j+0.5)/H*(y1-y0);
    for(var i=0;i<W;i++){ var x=x0+(i+0.5)/W*(x1-x0); col(x,y,d,(j*W+i)*4); } }
  oc.putImageData(im,0,0);
  var off2=document.createElement('canvas'); off2.width=pw; off2.height=ph;
  var o2=off2.getContext('2d'); o2.imageSmoothingEnabled=true; o2.imageSmoothingQuality='high';
  var c1=document.createElement('canvas'); c1.width=pw*SS/ (SS>2?1.5:1); c1.height=ph*SS/(SS>2?1.5:1);
  var x1c=c1.getContext('2d'); x1c.imageSmoothingQuality='high'; x1c.drawImage(off,0,0,c1.width,c1.height);
  o2.drawImage(c1,0,0,pw,ph); off=off2;
  ctx.save();
  ctx.beginPath(); ctx.rect(px,py,pw,ph); ctx.clip();
  if(clip){ ctx.beginPath();
    for(var k=0;k<LOC.length;k++){ var X=px+(LOC[k][0]-x0)/(x1-x0)*pw, Y=py+(y1-LOC[k][1])/(y1-y0)*ph; if(k==0)ctx.moveTo(X,Y); else ctx.lineTo(X,Y);} 
    ctx.closePath(); ctx.clip(); }
  ctx.drawImage(off,px,py);
  ctx.restore();
}
// main plot: X=968+740x, Y=561.5-516y
var PX=969, PY=128, PW=620, PH=433;
render(PX,PY,PW,PH,(PX-968)/740,(PX+PW-968)/740,(561.5-(PY+PH))/516,(561.5-PY)/516,true);
// inset
render(1374,134,208,161,0.3947,0.4444,0.4806,0.5299,true);
})();

</script>
</body></html>
